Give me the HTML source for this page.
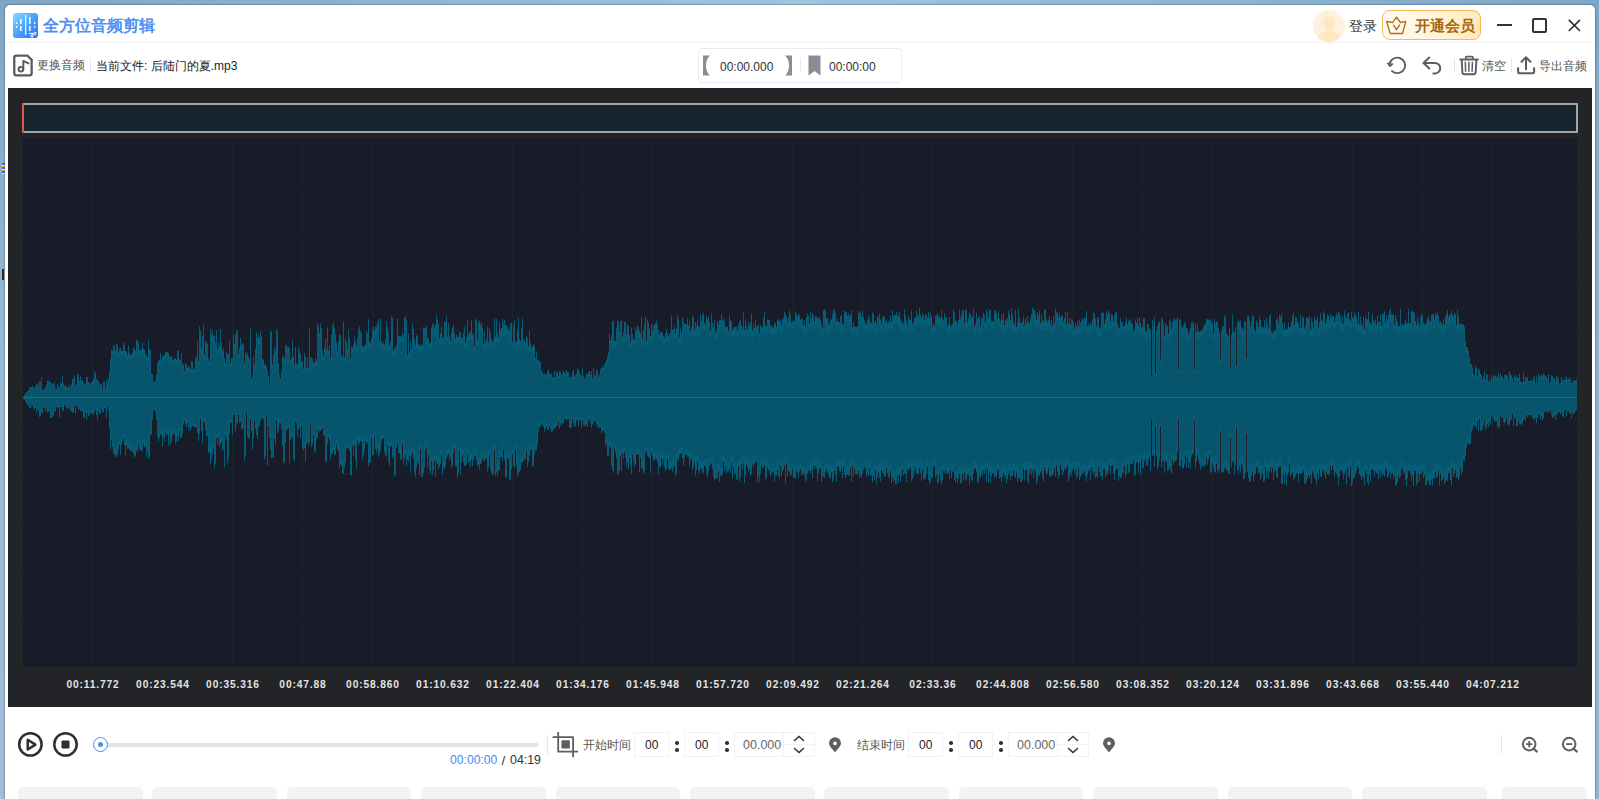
<!DOCTYPE html>
<html><head><meta charset="utf-8">
<style>
*{box-sizing:border-box;margin:0;padding:0}
html,body{width:1599px;height:799px;overflow:hidden}
body{position:relative;background:linear-gradient(90deg,#82a8c7 0%,#9cbdd6 50%,#80a7c6 100%);font-family:"Liberation Sans",sans-serif;color:#333}
.a{position:absolute}
.win{left:5px;top:5px;width:1590px;height:810px;background:#fff;border-radius:5px 5px 0 0;box-shadow:0 0 1px 1px rgba(50,80,110,.35)}
.t{position:absolute;white-space:nowrap;line-height:1}
</style></head><body>
<div class="a" style="left:0;top:0;width:1599px;height:6px;background:linear-gradient(90deg,#7fa5c4,#a3c3db 50%,#7ea6c6)"></div>
<div class="a" style="left:0;top:0;width:6px;height:799px;background:linear-gradient(180deg,#80a6c5,#9dbbd5 50%,#a3bdd6)"></div>
<div class="a" style="left:1594px;top:0;width:5px;height:799px;background:linear-gradient(180deg,#7ea6c6,#92b2d0 50%,#96b5d2)"></div>
<div class="a" style="left:2px;top:163px;width:3px;height:11px;background:repeating-linear-gradient(180deg,#2c6fc2 0 2px,#f3f6fa 2px 3px,#e7a24a 3px 4px)"></div>
<div class="a" style="left:2px;top:269px;width:3px;height:11px;background:linear-gradient(90deg,#1d2a58 60%,#e2a05a 60%)"></div>
<div class="a win"></div>
<!-- logo -->
<div class="a" style="left:13px;top:13px;width:25px;height:25px;border-radius:3px;background:linear-gradient(135deg,#84dcfd 0%,#4aa3fb 50%,#2a73f3 100%)"></div>
<svg class="a" style="left:13px;top:13px" width="25" height="25" viewBox="0 0 25 25">
<g fill="#fff" opacity=".92">
<rect x="3" y="9" width="1.3" height="2"/><rect x="3" y="13" width="1.3" height="2"/>
<rect x="7" y="6" width="1.6" height="5"/><rect x="7" y="13" width="1.6" height="5"/>
<rect x="12" y="2" width="1.3" height="20"/>
<rect x="16" y="4" width="1.6" height="7"/><rect x="16" y="13" width="1.6" height="5"/>
<rect x="21" y="9" width="1.3" height="2"/><rect x="21" y="13" width="1.3" height="2"/>
</g>
<g stroke="#fff" stroke-width=".9" fill="none"><circle cx="22" cy="20.5" r="1.2"/><circle cx="19" cy="23" r="1.2"/><path d="M16 20.5h5M20.5 20.5l-2 2"/></g>
</svg>
<div class="t" style="left:43px;top:18px;font-size:16px;font-weight:bold;color:#5090f0">全方位音频剪辑</div>
<div class="a" style="left:8px;top:42px;width:1584px;height:1px;background:#eef0f4"></div>

<!-- avatar -->
<div class="a" style="left:1313px;top:9.5px;width:32px;height:32px;border-radius:50%;background:#fef1df;overflow:hidden">
<div class="a" style="left:10px;top:6.5px;width:11.5px;height:13px;border-radius:40% 40% 45% 45%;background:#ffe7c3"></div>
<div class="a" style="left:13px;top:17px;width:6px;height:6px;background:#ffe7c3"></div>
<div class="a" style="left:5px;top:21.5px;width:22px;height:16px;border-radius:50% 50% 40% 40%;background:#ffe7c3"></div>
</div>
<div class="t" style="left:1349px;top:19px;font-size:14px;color:#333">登录</div>
<!-- vip -->
<div class="a" style="left:1382px;top:10px;width:99px;height:30px;border-radius:8px;border:1.3px solid #fcb853;background:linear-gradient(90deg,#fffcf3,#fff4d8 60%,#ffe9b8)"></div>
<svg class="a" style="left:1385px;top:15px" width="22" height="20" viewBox="0 0 22 20">
<path d="M1.6 6.4 L7.6 7.5 L11.4 2.1 L15.4 7.5 L20.7 6.4 L17.6 18.5 H5.2 Z" fill="none" stroke="#b06a10" stroke-width="1.3" stroke-linejoin="round"/>
<path d="M8.6 10.2 L11.4 14.7 L14.6 10.2" fill="none" stroke="#b06a10" stroke-width="1.3" stroke-linecap="round" stroke-linejoin="round"/>
</svg>
<div class="t" style="left:1415px;top:18.5px;font-size:14.7px;font-weight:bold;color:#a8660c">开通会员</div>
<!-- window controls -->
<div class="a" style="left:1497px;top:24px;width:15px;height:2px;background:#333"></div>
<div class="a" style="left:1532px;top:18px;width:15px;height:15px;border:2px solid #333;border-radius:2px"></div>
<svg class="a" style="left:1566px;top:17px" width="17" height="17" viewBox="0 0 17 17"><path d="M3.3 3.3L13.5 13.5M13.5 3.3L3.3 13.5" stroke="#333" stroke-width="1.7" stroke-linecap="round"/></svg>

<!-- toolbar -->
<svg class="a" style="left:12px;top:53px" width="23" height="25" viewBox="0 0 23 25">
<path d="M4.3 2.55 H15.3 L19.65 6.9 V20.3 Q19.65 22.35 17.6 22.35 H4.3 Q2.25 22.35 2.25 20.3 V4.6 Q2.25 2.55 4.3 2.55 Z" fill="none" stroke="#5a5c61" stroke-width="2.3" stroke-linejoin="round"/>
<path d="M11.3 16.5 V7.9 L16.4 10.3" fill="none" stroke="#5a5c61" stroke-width="2" stroke-linecap="round" stroke-linejoin="round"/>
<circle cx="8.9" cy="16.2" r="2.3" fill="none" stroke="#5a5c61" stroke-width="2"/>
</svg>
<div class="t" style="left:37px;top:59px;font-size:12px;color:#555">更换音频</div>
<div class="a" style="left:90px;top:58px;width:1px;height:15px;background:#e3e6ee"></div>
<div class="t" style="left:96px;top:60px;font-size:12px;color:#222">当前文件: 后陆门的夏.mp3</div>

<!-- center time box -->
<div class="a" style="left:698px;top:48px;width:204px;height:35px;border:1px solid #e8ebf3;border-radius:4px"></div>
<svg class="a" style="left:702px;top:55px" width="10" height="21" viewBox="0 0 10 21"><path d="M1 0.5 H8 Q4 4 4 10.5 Q4 17 8 20.5 H1 Z" fill="#8a8d93"/></svg>
<div class="t" style="left:720px;top:61px;font-size:12px;color:#333">00:00.000</div>
<svg class="a" style="left:783px;top:55px" width="10" height="21" viewBox="0 0 10 21"><path d="M9 0.5 H2 Q6 4 6 10.5 Q6 17 2 20.5 H9 Z" fill="#8a8d93"/></svg>
<div class="a" style="left:800px;top:58px;width:1px;height:14px;background:#e6e9f0"></div>
<svg class="a" style="left:808px;top:55px" width="13" height="21" viewBox="0 0 13 21"><path d="M0.5 0.5 H12.5 V20.5 L6.5 16 L0.5 20.5 Z" fill="#8a8d93"/></svg>
<div class="t" style="left:829px;top:61px;font-size:12px;color:#333">00:00:00</div>

<!-- right toolbar -->
<svg class="a" style="left:1386px;top:55px" width="21" height="21" viewBox="0 0 21 21">
<path d="M5.9 16 A7.8 7.8 0 1 0 3.5 10.4" fill="none" stroke="#5c5e63" stroke-width="1.8" stroke-linecap="round"/>
<path d="M2 8.2 L4 11 L6.3 9" fill="none" stroke="#5c5e63" stroke-width="1.8" stroke-linecap="round" stroke-linejoin="round"/>
</svg>
<svg class="a" style="left:1421px;top:55px" width="21" height="21" viewBox="0 0 21 21">
<path d="M8.3 2.6 L2.5 8 L8.3 13.5 M2.5 8 H14 A5.2 5.2 0 0 1 14 18.4 H12.4" fill="none" stroke="#5c5e63" stroke-width="2" stroke-linecap="round" stroke-linejoin="round"/>
</svg>
<div class="a" style="left:1454px;top:58px;width:1px;height:15px;background:#e3e6ee"></div>
<svg class="a" style="left:1459px;top:55px" width="20" height="21" viewBox="0 0 20 21">
<path d="M1.3 4.5 H18.9" stroke="#5c5e63" stroke-width="1.9" stroke-linecap="round"/>
<path d="M6.8 4 V2.6 Q6.8 1.6 7.8 1.6 H12.9 Q13.9 1.6 13.9 2.6 V4" fill="none" stroke="#5c5e63" stroke-width="1.7"/>
<path d="M2.7 5 L3.4 17.3 Q3.5 19.3 5.5 19.3 H14.6 Q16.6 19.3 16.7 17.3 L17.4 5" fill="none" stroke="#5c5e63" stroke-width="1.9" stroke-linejoin="round"/>
<path d="M6.3 6.8 L6.6 16.7 M9.9 6.8 V16.7 M13.4 6.8 L13.1 16.7" stroke="#5c5e63" stroke-width="1.5"/>
</svg>
<div class="t" style="left:1482px;top:60px;font-size:12px;color:#555">清空</div>
<div class="a" style="left:1511px;top:58px;width:1px;height:15px;background:#e3e6ee"></div>
<svg class="a" style="left:1516px;top:55px" width="20" height="21" viewBox="0 0 20 21">
<path d="M10 2.5 V14.3 M5.6 6.8 L10 2.3 L14.4 6.8" fill="none" stroke="#5c5e63" stroke-width="2.1" stroke-linecap="round" stroke-linejoin="round"/>
<path d="M2.1 13.2 V16.5 Q2.1 18.3 3.9 18.3 H16.3 Q18.1 18.3 18.1 16.5 V13.2" fill="none" stroke="#5c5e63" stroke-width="2.1" stroke-linecap="round" stroke-linejoin="round"/>
</svg>
<div class="t" style="left:1539px;top:60px;font-size:12px;color:#555">导出音频</div>

<!-- dark panel -->
<svg class="a" style="left:8px;top:88px" width="1584" height="619" viewBox="8 88 1584 619">
<rect x="8" y="88" width="1584" height="619" fill="#222428"/>
<rect x="23" y="138" width="1554" height="529" fill="#171c28"/>
<g stroke="#1d222b" stroke-width="1"><path d="M92.5 138V667"/><path d="M162.5 138V667"/><path d="M232.5 138V667"/><path d="M302.5 138V667"/><path d="M372.5 138V667"/><path d="M442.5 138V667"/><path d="M512.5 138V667"/><path d="M582.5 138V667"/><path d="M652.5 138V667"/><path d="M722.5 138V667"/><path d="M792.5 138V667"/><path d="M862.5 138V667"/><path d="M932.5 138V667"/><path d="M1002.5 138V667"/><path d="M1072.5 138V667"/><path d="M1142.5 138V667"/><path d="M1212.5 138V667"/><path d="M1282.5 138V667"/><path d="M1352.5 138V667"/><path d="M1422.5 138V667"/><path d="M1492.5 138V667"/><path d="M23 185.5H1577"/><path d="M23 233.5H1577"/><path d="M23 281.5H1577"/><path d="M23 329.5H1577"/><path d="M23 377.5H1577"/><path d="M23 425.5H1577"/><path d="M23 473.5H1577"/><path d="M23 521.5H1577"/><path d="M23 569.5H1577"/><path d="M23 617.5H1577"/></g>
<path d="M23,397.5V396.7h1V395.0h1V393.2h1V392.4h1V390.9h1V390.3h1V387.6h1V387.1h1V387.0h1V385.8h1V387.7h1V387.9h1V386.5h1V383.9h1V383.5h1V387.0h1V381.6h1V381.9h1V377.3h1V390.1h1V390.6h1V388.8h1V387.3h1V384.8h1V380.5h1V380.6h1V381.3h1V382.3h1V382.9h1V383.6h1V384.2h1V381.4h1V388.9h1V388.7h1V384.1h1V386.8h1V387.3h1V382.6h1V383.6h1V375.8h1V383.5h1V385.7h1V384.7h1V387.2h1V387.3h1V386.8h1V384.4h1V387.5h1V384.4h1V378.8h1V379.2h1V375.6h1V386.3h1V383.9h1V373.5h1V374.5h1V380.7h1V375.9h1V381.0h1V379.9h1V383.4h1V382.9h1V384.7h1V377.0h1V377.3h1V382.2h1V382.8h1V385.7h1V381.8h1V382.1h1V379.1h1V371.4h1V373.1h1V379.3h1V379.9h1V381.1h1V383.2h1V384.2h1V383.7h1V389.6h1V381.5h1V381.8h1V387.5h1V379.9h1V383.2h1V378.3h1V371.4h1V359.0h1V349.6h1V350.7h1V345.0h1V345.9h1V350.8h1V343.6h1V344.5h1V352.5h1V348.6h1V347.8h1V350.6h1V350.7h1V342.1h1V344.9h1V350.9h1V351.2h1V355.3h1V345.5h1V352.8h1V355.1h1V354.9h1V352.8h1V347.7h1V349.0h1V351.1h1V339.7h1V340.8h1V342.6h1V350.2h1V349.6h1V350.0h1V343.3h1V348.3h1V349.5h1V353.5h1V355.6h1V357.6h1V339.7h1V349.6h1V349.8h1V373.6h1V374.2h1V383.0h1V380.9h1V380.8h1V375.2h1V363.3h1V360.4h1V360.3h1V353.2h1V360.6h1V356.3h1V356.2h1V354.6h1V351.8h1V351.8h1V352.2h1V352.9h1V356.0h1V357.5h1V356.0h1V359.5h1V360.4h1V358.6h1V358.6h1V360.0h1V350.6h1V350.7h1V358.9h1V360.4h1V353.2h1V365.4h1V363.7h1V371.3h1V363.5h1V364.1h1V367.8h1V366.4h1V366.8h1V368.8h1V361.3h1V362.1h1V369.9h1V368.2h1V358.8h1V356.1h1V341.2h1V361.3h1V326.6h1V330.6h1V348.8h1V335.4h1V324.4h1V355.0h1V341.7h1V340.9h1V343.9h1V358.8h1V361.8h1V328.7h1V334.5h1V330.2h1V336.2h1V335.3h1V342.4h1V330.6h1V349.8h1V342.6h1V346.0h1V329.1h1V343.3h1V350.6h1V348.3h1V357.9h1V363.3h1V351.4h1V354.5h1V353.7h1V340.9h1V362.8h1V358.3h1V358.7h1V333.8h1V343.6h1V334.5h1V329.9h1V331.5h1V354.0h1V347.8h1V338.1h1V344.8h1V343.3h1V344.8h1V363.6h1V352.1h1V355.0h1V352.5h1V356.8h1V359.0h1V328.7h1V379.1h1V375.0h1V356.4h1V364.5h1V349.1h1V332.5h1V338.1h1V334.7h1V338.0h1V331.1h1V336.2h1V359.3h1V359.4h1V364.2h1V364.8h1V366.3h1V371.1h1V375.9h1V384.4h1V331.0h1V331.7h1V364.4h1V355.0h1V347.1h1V350.4h1V329.5h1V331.5h1V363.5h1V375.0h1V378.8h1V371.4h1V356.8h1V355.5h1V359.1h1V345.0h1V345.1h1V347.0h1V346.8h1V348.3h1V360.1h1V358.1h1V340.0h1V356.6h1V364.4h1V346.9h1V363.5h1V365.3h1V346.5h1V350.4h1V354.1h1V360.9h1V362.2h1V368.8h1V353.1h1V356.5h1V368.6h1V356.4h1V367.7h1V328.7h1V357.6h1V356.9h1V359.1h1V362.6h1V362.8h1V358.2h1V361.2h1V322.9h1V326.5h1V333.1h1V323.2h1V328.6h1V350.5h1V356.1h1V347.4h1V338.0h1V349.9h1V327.5h1V350.6h1V345.4h1V358.5h1V334.8h1V325.1h1V321.9h1V327.4h1V334.8h1V342.2h1V351.8h1V341.6h1V333.7h1V335.2h1V354.9h1V357.7h1V321.6h1V357.3h1V338.4h1V341.8h1V349.1h1V329.9h1V338.6h1V358.7h1V346.1h1V347.7h1V344.5h1V336.6h1V341.8h1V346.5h1V338.2h1V329.8h1V326.5h1V331.2h1V332.8h1V346.1h1V346.8h1V345.6h1V344.5h1V330.9h1V333.6h1V319.1h1V341.5h1V343.1h1V338.5h1V329.4h1V326.2h1V330.7h1V326.5h1V326.5h1V322.8h1V318.7h1V341.0h1V319.2h1V341.3h1V344.3h1V342.2h1V344.5h1V339.4h1V321.1h1V327.2h1V332.4h1V345.5h1V341.7h1V316.7h1V317.9h1V351.5h1V348.4h1V348.1h1V345.0h1V318.6h1V335.4h1V335.7h1V336.1h1V336.8h1V332.8h1V334.9h1V317.7h1V316.0h1V320.3h1V355.2h1V333.2h1V352.9h1V341.8h1V349.0h1V323.1h1V328.5h1V339.2h1V345.0h1V335.1h1V336.2h1V343.9h1V346.1h1V343.6h1V346.0h1V344.8h1V327.3h1V328.5h1V327.7h1V325.7h1V338.6h1V338.1h1V343.6h1V342.2h1V327.8h1V324.2h1V323.0h1V328.5h1V325.1h1V314.7h1V319.5h1V323.8h1V338.5h1V333.3h1V326.8h1V337.5h1V337.6h1V321.7h1V322.0h1V315.4h1V336.4h1V323.3h1V335.4h1V340.8h1V331.9h1V327.5h1V325.1h1V333.2h1V338.4h1V334.2h1V336.7h1V336.7h1V331.7h1V332.6h1V337.8h1V338.0h1V332.4h1V326.5h1V343.0h1V337.4h1V319.4h1V334.8h1V332.2h1V331.2h1V320.3h1V334.5h1V333.6h1V346.2h1V318.8h1V320.3h1V339.3h1V322.4h1V320.6h1V325.0h1V322.2h1V327.9h1V344.0h1V331.8h1V342.8h1V338.9h1V326.9h1V342.2h1V328.1h1V332.4h1V339.8h1V342.5h1V339.5h1V317.8h1V336.6h1V318.8h1V332.1h1V337.2h1V322.4h1V329.3h1V328.2h1V319.3h1V323.2h1V319.8h1V325.0h1V325.2h1V329.0h1V326.8h1V331.6h1V323.5h1V322.7h1V342.3h1V324.7h1V320.2h1V342.2h1V341.3h1V329.8h1V317.5h1V338.8h1V341.2h1V328.0h1V318.4h1V341.2h1V339.2h1V342.5h1V336.3h1V337.4h1V345.7h1V330.8h1V342.6h1V347.4h1V346.5h1V344.1h1V345.6h1V358.2h1V351.2h1V360.5h1V359.6h1V361.6h1V362.5h1V371.5h1V372.1h1V374.3h1V373.4h1V374.6h1V374.7h1V371.6h1V368.9h1V373.4h1V374.3h1V373.7h1V377.2h1V377.8h1V370.9h1V377.7h1V372.0h1V372.0h1V376.2h1V371.3h1V371.9h1V375.1h1V374.2h1V370.5h1V372.4h1V373.2h1V370.0h1V371.9h1V372.8h1V378.1h1V376.4h1V377.4h1V371.8h1V369.7h1V377.1h1V375.0h1V374.1h1V368.5h1V369.7h1V372.5h1V375.4h1V375.6h1V368.1h1V376.7h1V378.6h1V378.8h1V373.9h1V374.5h1V372.3h1V371.0h1V374.7h1V371.1h1V378.4h1V367.6h1V375.2h1V375.3h1V369.2h1V370.5h1V377.8h1V374.3h1V369.3h1V368.0h1V365.6h1V368.0h1V364.2h1V362.2h1V360.0h1V355.8h1V351.7h1V333.7h1V340.5h1V336.2h1V320.8h1V321.1h1V340.9h1V340.7h1V328.3h1V320.7h1V321.3h1V331.8h1V321.6h1V320.6h1V336.6h1V331.8h1V322.1h1V322.2h1V334.0h1V325.0h1V325.4h1V335.3h1V342.4h1V327.4h1V333.8h1V339.3h1V339.9h1V327.3h1V330.4h1V325.3h1V326.8h1V330.9h1V333.1h1V317.1h1V339.1h1V330.3h1V323.0h1V316.4h1V341.1h1V319.7h1V322.8h1V328.6h1V336.1h1V324.0h1V331.1h1V325.6h1V324.6h1V323.2h1V320.5h1V324.6h1V330.6h1V334.5h1V332.1h1V331.7h1V332.7h1V336.4h1V337.4h1V333.7h1V329.3h1V333.0h1V336.0h1V334.2h1V331.8h1V315.4h1V329.4h1V329.5h1V326.6h1V333.2h1V328.1h1V314.8h1V319.1h1V336.9h1V328.5h1V333.1h1V316.9h1V321.4h1V323.7h1V324.2h1V324.1h1V318.5h1V325.8h1V320.5h1V331.4h1V326.8h1V316.5h1V317.2h1V329.4h1V322.0h1V326.6h1V320.5h1V325.6h1V327.0h1V314.2h1V321.0h1V314.7h1V313.1h1V323.4h1V322.4h1V314.9h1V319.0h1V316.1h1V322.0h1V331.2h1V313.2h1V322.8h1V327.3h1V320.3h1V333.1h1V329.6h1V321.1h1V323.9h1V319.7h1V320.1h1V314.5h1V319.8h1V321.5h1V318.6h1V327.0h1V326.7h1V326.7h1V331.2h1V315.3h1V320.5h1V321.2h1V329.9h1V328.6h1V326.6h1V327.1h1V326.7h1V331.0h1V324.8h1V321.1h1V320.4h1V325.2h1V327.8h1V312.6h1V329.7h1V320.2h1V326.1h1V329.3h1V322.2h1V325.6h1V322.5h1V313.6h1V330.3h1V323.4h1V328.1h1V319.2h1V326.7h1V325.6h1V324.4h1V332.9h1V324.9h1V326.9h1V327.3h1V318.3h1V311.5h1V325.4h1V326.1h1V319.4h1V319.7h1V319.5h1V326.3h1V325.5h1V328.2h1V326.7h1V322.5h1V323.4h1V326.8h1V320.2h1V319.6h1V321.3h1V319.2h1V325.0h1V319.5h1V318.1h1V312.0h1V314.8h1V316.1h1V321.1h1V318.1h1V310.4h1V314.8h1V322.4h1V320.5h1V321.9h1V320.6h1V311.6h1V313.8h1V317.2h1V314.3h1V314.7h1V319.4h1V318.4h1V318.8h1V324.8h1V320.3h1V326.8h1V317.0h1V313.2h1V316.1h1V323.4h1V311.7h1V318.8h1V312.7h1V315.2h1V321.8h1V315.9h1V316.2h1V317.8h1V318.6h1V317.3h1V320.0h1V324.2h1V328.2h1V309.7h1V309.4h1V310.6h1V318.6h1V318.1h1V322.9h1V324.6h1V318.4h1V320.2h1V314.8h1V309.8h1V309.0h1V313.2h1V321.7h1V318.5h1V322.1h1V322.3h1V316.1h1V314.9h1V324.4h1V324.2h1V311.0h1V311.6h1V312.0h1V315.4h1V312.7h1V316.5h1V315.0h1V309.7h1V327.2h1V322.4h1V326.8h1V326.2h1V327.1h1V326.0h1V313.6h1V311.1h1V312.9h1V316.9h1V310.9h1V317.3h1V320.2h1V323.4h1V323.7h1V320.6h1V315.7h1V318.4h1V323.3h1V322.3h1V311.5h1V313.7h1V322.4h1V320.7h1V323.8h1V315.9h1V317.6h1V313.6h1V319.4h1V323.8h1V317.5h1V316.3h1V316.4h1V322.1h1V318.9h1V323.6h1V322.4h1V320.9h1V315.5h1V321.6h1V310.0h1V315.5h1V314.6h1V314.8h1V311.6h1V315.5h1V315.8h1V312.0h1V319.0h1V321.4h1V322.5h1V323.5h1V309.6h1V315.7h1V320.5h1V325.0h1V316.2h1V318.6h1V320.0h1V311.1h1V324.0h1V321.9h1V317.7h1V317.5h1V310.3h1V314.9h1V316.6h1V307.8h1V315.0h1V317.7h1V313.8h1V315.7h1V319.5h1V313.6h1V315.3h1V317.8h1V312.1h1V317.8h1V312.8h1V316.1h1V326.4h1V323.2h1V325.5h1V315.5h1V315.7h1V313.1h1V315.2h1V317.2h1V317.8h1V310.1h1V318.3h1V320.4h1V313.2h1V318.1h1V317.0h1V326.2h1V324.0h1V317.2h1V325.7h1V325.4h1V323.6h1V309.7h1V312.2h1V320.5h1V321.4h1V324.0h1V320.1h1V309.8h1V318.2h1V314.4h1V310.0h1V310.2h1V323.0h1V309.3h1V310.1h1V322.1h1V317.9h1V312.6h1V314.5h1V317.7h1V315.9h1V308.5h1V326.6h1V323.8h1V312.5h1V319.0h1V317.5h1V316.4h1V326.6h1V318.5h1V317.5h1V313.1h1V315.2h1V322.6h1V309.8h1V312.6h1V317.8h1V309.2h1V310.1h1V321.3h1V321.0h1V321.4h1V310.5h1V310.5h1V313.8h1V319.3h1V311.5h1V318.8h1V321.6h1V314.6h1V320.1h1V312.9h1V325.0h1V319.7h1V320.8h1V317.4h1V310.5h1V314.3h1V320.2h1V308.5h1V314.1h1V321.5h1V324.5h1V309.6h1V326.9h1V322.5h1V309.1h1V317.8h1V323.0h1V322.8h1V321.2h1V316.8h1V325.3h1V318.4h1V323.2h1V315.9h1V322.1h1V323.7h1V318.6h1V314.6h1V307.8h1V309.8h1V310.0h1V313.6h1V319.8h1V312.1h1V315.6h1V310.5h1V323.0h1V314.1h1V320.2h1V321.6h1V309.4h1V309.2h1V319.6h1V322.5h1V319.8h1V316.0h1V323.8h1V320.0h1V325.7h1V316.6h1V322.6h1V309.0h1V312.8h1V312.1h1V317.4h1V313.5h1V317.7h1V315.5h1V315.5h1V321.4h1V318.1h1V311.2h1V323.9h1V311.7h1V323.1h1V318.1h1V324.5h1V318.7h1V319.4h1V321.4h1V328.7h1V322.9h1V326.6h1V321.1h1V326.1h1V319.4h1V323.3h1V320.8h1V318.4h1V320.4h1V317.4h1V318.0h1V310.9h1V326.3h1V323.3h1V325.2h1V322.5h1V325.0h1V319.6h1V312.5h1V313.5h1V318.7h1V326.5h1V317.6h1V317.3h1V328.6h1V327.6h1V313.0h1V311.7h1V312.9h1V323.7h1V319.4h1V311.8h1V314.3h1V311.0h1V312.8h1V321.6h1V314.6h1V315.1h1V321.4h1V314.7h1V312.4h1V311.9h1V322.9h1V328.2h1V327.2h1V318.5h1V321.8h1V322.5h1V326.4h1V325.8h1V322.4h1V317.5h1V324.3h1V321.2h1V319.6h1V319.7h1V322.9h1V322.9h1V331.8h1V329.6h1V319.6h1V322.7h1V318.3h1V325.2h1V317.0h1V322.9h1V327.7h1V326.9h1V318.1h1V318.2h1V331.0h1V332.4h1V323.7h1V324.4h1V328.4h1V330.3h1V375.5h1V320.0h1V325.6h1V317.6h1V373.5h1V330.8h1V326.1h1V322.8h1V321.6h1V359.5h1V317.5h1V319.3h1V323.7h1V335.4h1V323.1h1V325.3h1V325.7h1V333.6h1V319.5h1V321.3h1V328.9h1V321.7h1V319.3h1V318.6h1V320.4h1V318.9h1V316.8h1V369.5h1V319.8h1V318.5h1V325.5h1V328.4h1V325.0h1V322.1h1V324.0h1V328.0h1V328.5h1V334.4h1V331.6h1V327.6h1V322.3h1V321.8h1V323.3h1V369.5h1V323.5h1V332.0h1V323.5h1V331.1h1V331.6h1V331.0h1V330.8h1V329.6h1V326.9h1V324.5h1V323.8h1V318.5h1V319.5h1V319.9h1V319.6h1V320.0h1V321.4h1V323.0h1V333.6h1V319.0h1V322.9h1V321.6h1V322.1h1V327.9h1V333.2h1V359.5h1V331.1h1V327.0h1V325.9h1V315.4h1V317.5h1V332.8h1V334.7h1V336.6h1V327.3h1V367.5h1V334.5h1V314.8h1V331.7h1V331.7h1V326.9h1V365.5h1V322.1h1V319.7h1V322.0h1V320.4h1V327.0h1V328.1h1V330.6h1V321.2h1V321.4h1V358.5h1V316.0h1V315.3h1V319.4h1V326.6h1V321.4h1V315.2h1V315.9h1V328.9h1V331.6h1V320.5h1V323.3h1V327.1h1V316.4h1V320.1h1V327.3h1V326.4h1V327.5h1V320.3h1V328.4h1V317.9h1V324.1h1V328.6h1V315.9h1V314.3h1V331.5h1V333.1h1V330.4h1V331.5h1V330.1h1V319.8h1V317.4h1V323.3h1V314.8h1V317.3h1V314.0h1V323.5h1V329.9h1V322.4h1V329.6h1V329.4h1V328.6h1V322.8h1V327.1h1V326.7h1V321.2h1V316.0h1V312.5h1V324.9h1V317.2h1V317.5h1V321.7h1V323.5h1V327.9h1V314.2h1V327.9h1V316.7h1V316.9h1V328.5h1V325.6h1V317.6h1V317.2h1V318.5h1V315.8h1V329.7h1V318.4h1V321.5h1V328.3h1V316.5h1V319.5h1V320.3h1V316.2h1V327.9h1V322.0h1V313.0h1V319.4h1V321.0h1V311.0h1V313.3h1V323.8h1V319.2h1V314.3h1V315.3h1V320.3h1V313.5h1V317.4h1V315.8h1V316.5h1V321.7h1V317.0h1V312.4h1V315.5h1V312.3h1V312.8h1V316.5h1V322.6h1V315.9h1V324.0h1V310.8h1V316.3h1V318.2h1V313.0h1V312.4h1V319.3h1V321.4h1V312.3h1V317.7h1V317.0h1V312.2h1V314.4h1V316.8h1V323.4h1V311.7h1V324.5h1V316.2h1V324.3h1V325.5h1V317.1h1V329.0h1V315.5h1V319.1h1V319.2h1V311.8h1V322.2h1V322.5h1V324.3h1V314.1h1V319.9h1V322.5h1V319.4h1V325.0h1V315.4h1V321.8h1V322.2h1V314.4h1V326.0h1V313.3h1V313.7h1V311.2h1V322.8h1V315.3h1V320.6h1V315.0h1V310.7h1V308.4h1V314.4h1V313.8h1V315.1h1V325.1h1V315.3h1V319.1h1V322.5h1V326.0h1V326.1h1V309.1h1V324.8h1V324.0h1V325.7h1V323.0h1V319.8h1V324.1h1V322.4h1V308.9h1V323.3h1V323.4h1V311.4h1V310.1h1V312.0h1V313.0h1V320.9h1V325.0h1V316.9h1V321.8h1V325.8h1V316.9h1V314.1h1V315.1h1V322.5h1V324.3h1V324.7h1V321.7h1V318.2h1V316.2h1V320.4h1V321.8h1V314.4h1V314.1h1V314.4h1V320.2h1V312.4h1V314.9h1V312.5h1V315.7h1V322.5h1V321.0h1V323.0h1V325.1h1V319.4h1V324.6h1V316.5h1V313.6h1V310.0h1V317.4h1V315.1h1V314.6h1V310.4h1V314.5h1V316.3h1V312.4h1V314.3h1V324.8h1V309.4h1V316.1h1V324.2h1V323.9h1V323.4h1V324.6h1V324.3h1V326.8h1V341.4h1V347.6h1V347.1h1V350.9h1V357.6h1V364.1h1V364.4h1V367.4h1V374.2h1V375.6h1V366.1h1V368.0h1V376.5h1V368.3h1V370.6h1V373.7h1V375.0h1V379.6h1V376.8h1V371.3h1V380.2h1V373.5h1V374.9h1V381.9h1V379.1h1V381.6h1V375.3h1V379.4h1V375.2h1V375.6h1V376.0h1V377.7h1V376.1h1V372.7h1V378.2h1V373.2h1V375.7h1V377.1h1V378.9h1V375.1h1V375.3h1V374.7h1V375.7h1V380.3h1V371.1h1V374.3h1V375.5h1V377.7h1V382.3h1V375.4h1V377.7h1V375.3h1V377.4h1V378.3h1V373.8h1V381.2h1V381.9h1V382.3h1V372.6h1V382.0h1V377.3h1V378.3h1V377.2h1V380.9h1V381.2h1V380.8h1V379.4h1V381.1h1V378.2h1V376.3h1V383.5h1V376.4h1V383.8h1V373.9h1V376.0h1V377.1h1V374.4h1V375.8h1V373.5h1V374.8h1V375.3h1V376.9h1V379.6h1V374.1h1V382.8h1V381.7h1V375.3h1V375.8h1V378.2h1V378.2h1V381.7h1V376.4h1V376.8h1V379.6h1V383.4h1V382.9h1V377.0h1V379.7h1V381.2h1V379.3h1V379.4h1V376.4h1V379.8h1V379.3h1V378.5h1V378.8h1V383.0h1V382.6h1V380.2h1V380.5h1V380.2h1V379.4h1V397.5V410.3h-1V410.9h-1V413.2h-1V414.3h-1V412.3h-1V418.6h-1V413.2h-1V413.8h-1V411.0h-1V411.7h-1V416.2h-1V409.8h-1V410.7h-1V417.2h-1V416.5h-1V412.6h-1V413.9h-1V412.1h-1V412.6h-1V414.3h-1V414.7h-1V419.6h-1V415.3h-1V417.2h-1V417.7h-1V415.3h-1V409.9h-1V412.4h-1V411.3h-1V412.8h-1V411.5h-1V411.7h-1V411.9h-1V418.3h-1V420.8h-1V416.0h-1V419.4h-1V414.6h-1V414.3h-1V417.7h-1V423.3h-1V418.1h-1V418.6h-1V420.1h-1V416.7h-1V416.6h-1V414.7h-1V414.8h-1V415.4h-1V417.6h-1V414.2h-1V421.0h-1V419.0h-1V419.7h-1V423.4h-1V424.4h-1V424.5h-1V423.8h-1V420.5h-1V425.8h-1V425.9h-1V418.1h-1V417.3h-1V425.8h-1V413.5h-1V419.6h-1V420.6h-1V425.1h-1V424.7h-1V423.8h-1V417.0h-1V421.4h-1V423.6h-1V422.3h-1V417.0h-1V418.6h-1V415.8h-1V427.8h-1V426.1h-1V428.2h-1V420.9h-1V420.5h-1V422.0h-1V419.1h-1V416.6h-1V416.9h-1V424.5h-1V421.4h-1V427.3h-1V423.7h-1V427.3h-1V430.2h-1V420.3h-1V425.6h-1V428.7h-1V430.2h-1V431.3h-1V419.1h-1V430.8h-1V420.8h-1V428.3h-1V426.2h-1V426.5h-1V424.8h-1V429.8h-1V432.6h-1V443.8h-1V444.1h-1V444.4h-1V442.4h-1V447.9h-1V456.0h-1V460.9h-1V460.1h-1V471.4h-1V473.9h-1V468.0h-1V477.0h-1V479.9h-1V477.1h-1V477.8h-1V470.4h-1V473.6h-1V476.8h-1V467.9h-1V485.5h-1V480.1h-1V472.8h-1V472.9h-1V481.2h-1V479.9h-1V482.0h-1V484.6h-1V477.4h-1V480.0h-1V481.2h-1V473.3h-1V485.6h-1V471.0h-1V476.9h-1V477.9h-1V471.7h-1V478.8h-1V478.1h-1V485.8h-1V479.8h-1V485.7h-1V484.0h-1V480.7h-1V480.7h-1V484.9h-1V484.6h-1V475.2h-1V478.6h-1V471.4h-1V474.1h-1V474.8h-1V481.7h-1V473.6h-1V482.9h-1V485.1h-1V470.4h-1V471.4h-1V485.8h-1V476.3h-1V480.9h-1V473.7h-1V470.6h-1V470.9h-1V478.4h-1V486.2h-1V479.9h-1V471.6h-1V474.0h-1V467.7h-1V469.3h-1V476.6h-1V478.2h-1V475.6h-1V482.0h-1V484.8h-1V485.9h-1V475.3h-1V478.7h-1V473.4h-1V474.1h-1V478.5h-1V471.4h-1V476.1h-1V478.0h-1V469.3h-1V468.3h-1V476.7h-1V474.4h-1V475.8h-1V471.4h-1V477.5h-1V469.8h-1V479.3h-1V473.5h-1V472.7h-1V471.6h-1V476.3h-1V470.5h-1V469.5h-1V469.8h-1V481.4h-1V474.5h-1V484.8h-1V481.9h-1V473.8h-1V470.3h-1V485.1h-1V478.2h-1V476.1h-1V480.0h-1V476.5h-1V474.2h-1V468.6h-1V466.1h-1V471.1h-1V473.5h-1V477.1h-1V479.1h-1V483.8h-1V486.0h-1V466.4h-1V478.4h-1V475.3h-1V467.5h-1V484.3h-1V470.5h-1V474.1h-1V479.2h-1V472.6h-1V470.0h-1V470.7h-1V477.3h-1V485.9h-1V476.7h-1V473.6h-1V471.7h-1V476.5h-1V469.7h-1V465.9h-1V470.7h-1V466.6h-1V473.7h-1V475.2h-1V474.5h-1V472.1h-1V478.7h-1V474.0h-1V469.6h-1V471.7h-1V477.4h-1V476.5h-1V469.6h-1V479.4h-1V473.0h-1V484.5h-1V479.5h-1V477.8h-1V473.6h-1V471.6h-1V483.6h-1V475.2h-1V478.1h-1V475.2h-1V478.5h-1V481.0h-1V483.8h-1V484.0h-1V470.5h-1V472.5h-1V473.4h-1V474.0h-1V473.6h-1V482.3h-1V472.9h-1V473.6h-1V476.3h-1V477.5h-1V480.6h-1V472.5h-1V473.7h-1V476.5h-1V464.0h-1V472.6h-1V475.3h-1V485.4h-1V472.6h-1V483.8h-1V474.6h-1V483.5h-1V483.9h-1V466.5h-1V467.1h-1V467.8h-1V477.8h-1V476.8h-1V470.1h-1V471.4h-1V480.5h-1V467.8h-1V472.6h-1V467.3h-1V471.7h-1V478.7h-1V470.8h-1V477.9h-1V467.4h-1V480.9h-1V482.0h-1V472.6h-1V476.7h-1V480.3h-1V473.4h-1V472.7h-1V468.6h-1V466.7h-1V472.9h-1V475.6h-1V481.6h-1V471.4h-1V476.0h-1V481.6h-1V481.9h-1V478.2h-1V471.7h-1V433.5h-1V472.8h-1V478.4h-1V479.5h-1V467.2h-1V463.7h-1V471.5h-1V465.5h-1V474.6h-1V469.4h-1V427.5h-1V465.2h-1V474.2h-1V461.6h-1V461.8h-1V467.2h-1V437.5h-1V473.6h-1V473.4h-1V471.1h-1V470.4h-1V468.3h-1V468.6h-1V471.9h-1V472.2h-1V473.1h-1V431.5h-1V469.8h-1V472.7h-1V469.9h-1V464.1h-1V472.0h-1V472.3h-1V468.8h-1V463.4h-1V472.0h-1V473.3h-1V454.8h-1V459.4h-1V465.1h-1V458.0h-1V464.6h-1V466.8h-1V465.3h-1V466.7h-1V465.8h-1V470.3h-1V463.7h-1V460.0h-1V455.4h-1V461.7h-1V467.9h-1V420.5h-1V453.3h-1V454.4h-1V456.7h-1V469.0h-1V462.7h-1V467.9h-1V457.8h-1V467.8h-1V455.6h-1V464.6h-1V467.9h-1V468.7h-1V460.3h-1V466.4h-1V466.5h-1V419.5h-1V452.2h-1V460.2h-1V461.7h-1V461.2h-1V464.9h-1V459.4h-1V473.2h-1V470.3h-1V467.6h-1V470.0h-1V471.0h-1V461.7h-1V461.1h-1V472.6h-1V460.2h-1V461.9h-1V467.6h-1V426.5h-1V459.3h-1V466.6h-1V469.0h-1V455.5h-1V426.5h-1V466.2h-1V455.5h-1V455.6h-1V419.5h-1V471.6h-1V456.4h-1V459.8h-1V465.2h-1V465.6h-1V459.1h-1V461.2h-1V467.9h-1V467.4h-1V459.8h-1V475.4h-1V462.9h-1V472.4h-1V462.1h-1V462.1h-1V474.8h-1V476.3h-1V460.2h-1V464.8h-1V463.7h-1V464.2h-1V472.3h-1V472.8h-1V464.3h-1V474.0h-1V477.3h-1V465.9h-1V473.0h-1V472.6h-1V477.8h-1V478.2h-1V475.9h-1V480.9h-1V468.7h-1V469.1h-1V470.5h-1V479.7h-1V473.8h-1V465.3h-1V466.1h-1V474.3h-1V464.9h-1V470.8h-1V474.5h-1V474.6h-1V476.9h-1V469.1h-1V469.4h-1V479.9h-1V475.9h-1V476.2h-1V472.1h-1V467.0h-1V478.1h-1V475.9h-1V478.0h-1V472.1h-1V475.2h-1V471.3h-1V467.2h-1V480.9h-1V470.2h-1V471.4h-1V474.8h-1V481.5h-1V475.9h-1V471.0h-1V472.9h-1V473.4h-1V475.0h-1V477.0h-1V480.3h-1V468.3h-1V475.9h-1V478.4h-1V469.5h-1V472.8h-1V468.2h-1V470.4h-1V476.1h-1V472.7h-1V478.2h-1V482.2h-1V464.9h-1V467.8h-1V469.2h-1V468.6h-1V472.6h-1V475.1h-1V469.4h-1V465.2h-1V475.6h-1V478.5h-1V471.9h-1V465.6h-1V476.7h-1V468.5h-1V473.0h-1V475.4h-1V476.1h-1V477.2h-1V476.1h-1V468.1h-1V472.9h-1V474.9h-1V470.7h-1V467.2h-1V481.2h-1V478.1h-1V470.8h-1V472.7h-1V475.4h-1V475.9h-1V480.7h-1V484.0h-1V472.6h-1V469.4h-1V477.4h-1V471.4h-1V475.1h-1V468.9h-1V473.8h-1V484.1h-1V480.9h-1V469.9h-1V470.4h-1V480.8h-1V468.7h-1V479.9h-1V482.0h-1V481.4h-1V477.8h-1V478.7h-1V482.6h-1V472.6h-1V478.1h-1V476.0h-1V470.5h-1V476.5h-1V476.2h-1V479.8h-1V470.8h-1V474.5h-1V479.0h-1V483.5h-1V476.3h-1V477.3h-1V472.7h-1V476.8h-1V481.7h-1V477.2h-1V478.7h-1V469.6h-1V471.5h-1V478.3h-1V475.6h-1V478.2h-1V473.3h-1V473.2h-1V476.2h-1V482.5h-1V472.2h-1V482.7h-1V469.4h-1V481.9h-1V468.8h-1V474.1h-1V470.4h-1V475.8h-1V472.7h-1V478.1h-1V476.2h-1V481.2h-1V482.4h-1V472.2h-1V469.0h-1V468.0h-1V473.7h-1V480.7h-1V480.4h-1V476.2h-1V484.2h-1V474.9h-1V475.2h-1V479.5h-1V480.8h-1V472.8h-1V479.9h-1V474.0h-1V482.7h-1V483.6h-1V474.1h-1V478.2h-1V482.9h-1V477.8h-1V482.9h-1V479.7h-1V471.1h-1V472.2h-1V478.1h-1V470.6h-1V479.1h-1V472.9h-1V473.3h-1V474.3h-1V470.1h-1V473.0h-1V470.8h-1V480.3h-1V484.1h-1V480.7h-1V474.3h-1V482.5h-1V482.9h-1V475.3h-1V477.5h-1V466.4h-1V466.1h-1V478.0h-1V477.5h-1V482.1h-1V484.0h-1V479.9h-1V467.2h-1V474.2h-1V479.5h-1V478.8h-1V479.3h-1V469.7h-1V481.1h-1V473.0h-1V468.1h-1V473.8h-1V474.3h-1V473.6h-1V467.6h-1V470.6h-1V476.0h-1V479.1h-1V481.0h-1V468.8h-1V468.2h-1V470.7h-1V468.9h-1V482.6h-1V473.7h-1V473.4h-1V475.4h-1V469.2h-1V476.6h-1V481.6h-1V474.0h-1V483.0h-1V476.3h-1V484.2h-1V484.3h-1V479.9h-1V482.1h-1V477.2h-1V483.8h-1V471.2h-1V476.9h-1V477.7h-1V473.2h-1V467.7h-1V477.0h-1V476.6h-1V473.7h-1V472.6h-1V469.9h-1V481.4h-1V478.2h-1V472.1h-1V477.2h-1V484.1h-1V470.1h-1V480.1h-1V475.6h-1V482.3h-1V475.1h-1V476.0h-1V468.4h-1V476.3h-1V474.1h-1V477.2h-1V468.7h-1V467.5h-1V470.2h-1V473.4h-1V477.8h-1V475.3h-1V477.5h-1V470.7h-1V474.1h-1V474.5h-1V473.8h-1V468.0h-1V477.1h-1V466.1h-1V482.3h-1V468.3h-1V475.7h-1V475.6h-1V474.5h-1V474.7h-1V478.1h-1V475.1h-1V466.7h-1V478.1h-1V468.0h-1V472.1h-1V470.7h-1V466.7h-1V466.8h-1V481.2h-1V474.9h-1V470.5h-1V479.6h-1V482.2h-1V472.2h-1V477.3h-1V479.0h-1V474.9h-1V472.1h-1V469.3h-1V472.5h-1V478.0h-1V477.1h-1V476.3h-1V481.7h-1V468.1h-1V469.0h-1V473.8h-1V481.5h-1V468.6h-1V465.9h-1V468.9h-1V465.7h-1V478.4h-1V470.3h-1V473.8h-1V470.7h-1V470.8h-1V473.3h-1V479.6h-1V481.9h-1V474.6h-1V475.5h-1V473.1h-1V475.4h-1V469.6h-1V471.5h-1V478.5h-1V472.1h-1V471.2h-1V478.3h-1V478.5h-1V477.0h-1V469.2h-1V474.7h-1V476.0h-1V472.1h-1V470.8h-1V476.2h-1V463.7h-1V483.2h-1V466.0h-1V469.8h-1V471.5h-1V476.1h-1V466.1h-1V478.8h-1V476.1h-1V469.8h-1V475.4h-1V475.7h-1V481.8h-1V471.2h-1V471.9h-1V473.7h-1V476.6h-1V470.3h-1V471.0h-1V467.5h-1V477.8h-1V480.9h-1V465.4h-1V467.4h-1V468.2h-1V465.3h-1V474.1h-1V481.7h-1V475.7h-1V482.6h-1V461.6h-1V462.3h-1V463.2h-1V467.5h-1V464.7h-1V473.7h-1V476.3h-1V469.5h-1V471.5h-1V467.5h-1V464.1h-1V476.1h-1V482.8h-1V463.4h-1V469.6h-1V464.0h-1V477.7h-1V481.3h-1V466.6h-1V479.6h-1V479.6h-1V473.1h-1V474.7h-1V467.6h-1V478.9h-1V463.2h-1V472.6h-1V468.4h-1V471.6h-1V471.3h-1V473.0h-1V466.6h-1V471.2h-1V461.9h-1V473.6h-1V476.0h-1V476.3h-1V481.5h-1V471.6h-1V478.2h-1V478.6h-1V478.8h-1V480.3h-1V476.6h-1V468.5h-1V463.5h-1V464.8h-1V465.7h-1V471.1h-1V477.8h-1V474.5h-1V467.0h-1V465.4h-1V472.8h-1V472.6h-1V469.6h-1V468.4h-1V473.7h-1V470.8h-1V461.3h-1V470.3h-1V475.9h-1V462.8h-1V466.9h-1V470.6h-1V458.3h-1V460.3h-1V466.5h-1V456.7h-1V457.0h-1V455.0h-1V454.7h-1V458.5h-1V465.9h-1V458.0h-1V453.5h-1V453.9h-1V455.1h-1V460.9h-1V459.2h-1V473.8h-1V476.2h-1V465.8h-1V467.6h-1V471.5h-1V468.0h-1V470.3h-1V469.7h-1V468.8h-1V459.1h-1V468.9h-1V471.1h-1V466.7h-1V459.5h-1V464.9h-1V458.0h-1V466.9h-1V467.6h-1V474.6h-1V462.2h-1V458.7h-1V458.4h-1V460.4h-1V460.3h-1V456.0h-1V452.8h-1V472.4h-1V458.2h-1V457.2h-1V455.6h-1V451.8h-1V452.2h-1V471.5h-1V473.4h-1V468.3h-1V468.5h-1V457.7h-1V471.9h-1V454.5h-1V454.2h-1V454.4h-1V464.4h-1V467.1h-1V460.2h-1V454.4h-1V474.4h-1V465.2h-1V457.8h-1V469.3h-1V463.0h-1V466.7h-1V457.8h-1V452.1h-1V458.9h-1V452.9h-1V471.2h-1V456.2h-1V470.9h-1V474.6h-1V474.4h-1V458.3h-1V452.5h-1V447.6h-1V472.4h-1V469.7h-1V465.6h-1V447.8h-1V446.2h-1V455.7h-1V456.6h-1V443.6h-1V446.0h-1V432.8h-1V430.7h-1V430.8h-1V433.1h-1V427.4h-1V427.6h-1V428.7h-1V424.1h-1V425.8h-1V421.0h-1V420.8h-1V422.5h-1V424.4h-1V427.6h-1V423.3h-1V418.9h-1V421.3h-1V427.1h-1V424.0h-1V426.9h-1V425.0h-1V425.1h-1V420.4h-1V427.4h-1V420.4h-1V420.4h-1V426.5h-1V419.4h-1V420.6h-1V425.9h-1V427.0h-1V422.7h-1V419.5h-1V427.7h-1V427.6h-1V427.9h-1V419.3h-1V419.5h-1V420.5h-1V418.7h-1V419.1h-1V423.0h-1V423.8h-1V423.3h-1V425.3h-1V428.4h-1V420.8h-1V425.4h-1V426.4h-1V427.3h-1V428.8h-1V429.0h-1V431.4h-1V432.0h-1V429.0h-1V425.5h-1V429.7h-1V430.1h-1V426.8h-1V428.6h-1V432.6h-1V426.5h-1V425.2h-1V423.7h-1V426.3h-1V427.1h-1V432.4h-1V444.8h-1V450.6h-1V450.2h-1V454.5h-1V465.0h-1V467.0h-1V449.3h-1V450.2h-1V455.7h-1V461.8h-1V467.2h-1V451.2h-1V459.3h-1V459.0h-1V461.3h-1V462.1h-1V463.0h-1V470.1h-1V471.8h-1V472.9h-1V476.6h-1V466.0h-1V449.8h-1V468.5h-1V465.7h-1V454.8h-1V469.3h-1V480.1h-1V480.5h-1V459.3h-1V457.8h-1V476.9h-1V477.1h-1V459.3h-1V449.4h-1V461.3h-1V457.0h-1V457.4h-1V470.0h-1V471.1h-1V475.7h-1V471.9h-1V475.8h-1V450.3h-1V474.6h-1V474.7h-1V472.4h-1V469.2h-1V455.5h-1V467.4h-1V471.2h-1V458.4h-1V459.0h-1V460.7h-1V461.2h-1V457.8h-1V463.3h-1V464.0h-1V469.6h-1V464.6h-1V466.5h-1V461.0h-1V455.4h-1V456.3h-1V459.9h-1V466.0h-1V459.6h-1V467.2h-1V461.8h-1V462.9h-1V454.7h-1V464.5h-1V465.6h-1V466.1h-1V462.6h-1V455.4h-1V462.2h-1V474.8h-1V451.0h-1V473.2h-1V477.8h-1V466.6h-1V465.8h-1V448.1h-1V453.1h-1V465.8h-1V468.0h-1V456.7h-1V459.7h-1V454.0h-1V455.4h-1V458.0h-1V465.4h-1V468.7h-1V468.4h-1V474.3h-1V455.2h-1V464.1h-1V467.1h-1V469.4h-1V464.1h-1V462.5h-1V477.1h-1V460.0h-1V470.3h-1V474.7h-1V461.5h-1V473.9h-1V470.2h-1V455.1h-1V466.9h-1V447.6h-1V450.3h-1V467.5h-1V473.3h-1V476.4h-1V476.8h-1V449.4h-1V475.3h-1V464.0h-1V461.5h-1V467.7h-1V476.9h-1V473.3h-1V457.7h-1V452.2h-1V456.3h-1V472.6h-1V455.6h-1V461.6h-1V459.9h-1V466.6h-1V454.6h-1V458.7h-1V464.7h-1V443.8h-1V458.7h-1V460.3h-1V452.9h-1V453.2h-1V443.6h-1V448.1h-1V474.3h-1V476.5h-1V455.7h-1V457.7h-1V445.9h-1V446.2h-1V465.7h-1V461.4h-1V445.2h-1V455.5h-1V456.6h-1V451.9h-1V438.5h-1V438.4h-1V441.4h-1V450.7h-1V454.1h-1V457.2h-1V448.5h-1V452.2h-1V449.2h-1V436.4h-1V454.9h-1V455.6h-1V438.6h-1V462.4h-1V463.1h-1V466.2h-1V442.6h-1V444.3h-1V441.1h-1V450.4h-1V455.7h-1V459.3h-1V441.6h-1V440.9h-1V442.8h-1V445.6h-1V440.7h-1V468.9h-1V459.6h-1V444.7h-1V455.2h-1V445.9h-1V475.2h-1V475.4h-1V451.0h-1V448.0h-1V448.5h-1V448.4h-1V463.1h-1V468.1h-1V474.0h-1V473.0h-1V465.7h-1V464.4h-1V468.0h-1V451.5h-1V449.4h-1V444.7h-1V454.7h-1V454.7h-1V450.0h-1V453.5h-1V454.2h-1V459.4h-1V440.7h-1V437.6h-1V444.1h-1V461.6h-1V462.5h-1V435.2h-1V435.4h-1V428.1h-1V430.1h-1V430.7h-1V432.5h-1V428.9h-1V437.8h-1V439.4h-1V450.4h-1V452.8h-1V435.2h-1V443.7h-1V447.0h-1V423.4h-1V442.9h-1V446.2h-1V441.8h-1V444.1h-1V461.5h-1V447.9h-1V450.1h-1V448.4h-1V425.5h-1V438.0h-1V427.5h-1V429.0h-1V436.3h-1V423.2h-1V421.8h-1V461.1h-1V459.6h-1V438.3h-1V437.1h-1V439.9h-1V463.5h-1V427.9h-1V428.8h-1V430.1h-1V443.0h-1V461.9h-1V463.5h-1V446.0h-1V429.0h-1V422.8h-1V423.1h-1V431.1h-1V432.8h-1V420.5h-1V444.4h-1V438.8h-1V457.4h-1V457.6h-1V458.3h-1V449.7h-1V437.9h-1V425.8h-1V466.1h-1V415.1h-1V456.1h-1V459.4h-1V419.1h-1V419.4h-1V417.5h-1V421.2h-1V425.2h-1V427.4h-1V439.1h-1V435.0h-1V428.8h-1V421.3h-1V438.6h-1V449.5h-1V430.9h-1V419.2h-1V438.2h-1V438.9h-1V436.6h-1V412.6h-1V455.8h-1V461.0h-1V428.8h-1V428.4h-1V429.6h-1V421.8h-1V423.6h-1V414.8h-1V423.1h-1V425.1h-1V431.8h-1V414.3h-1V415.2h-1V435.1h-1V422.8h-1V423.3h-1V433.8h-1V458.4h-1V463.7h-1V439.6h-1V435.4h-1V467.1h-1V449.1h-1V451.0h-1V442.2h-1V444.2h-1V447.2h-1V436.9h-1V444.6h-1V438.3h-1V464.1h-1V468.2h-1V448.2h-1V453.4h-1V459.4h-1V464.3h-1V451.8h-1V453.1h-1V436.0h-1V436.5h-1V430.0h-1V422.5h-1V421.0h-1V443.2h-1V430.9h-1V419.3h-1V433.4h-1V441.0h-1V432.4h-1V427.3h-1V428.2h-1V426.7h-1V426.6h-1V426.3h-1V427.4h-1V430.9h-1V426.7h-1V430.0h-1V422.7h-1V426.9h-1V424.7h-1V421.0h-1V424.2h-1V433.4h-1V437.3h-1V437.7h-1V430.8h-1V441.2h-1V436.6h-1V441.7h-1V443.8h-1V433.9h-1V433.7h-1V435.7h-1V441.5h-1V444.9h-1V432.5h-1V445.4h-1V434.3h-1V435.4h-1V432.5h-1V440.9h-1V437.1h-1V445.9h-1V435.3h-1V434.2h-1V437.9h-1V441.3h-1V436.1h-1V419.7h-1V412.2h-1V410.0h-1V410.5h-1V420.0h-1V434.1h-1V435.3h-1V456.7h-1V459.2h-1V451.5h-1V457.0h-1V446.2h-1V447.0h-1V444.0h-1V450.4h-1V450.9h-1V450.0h-1V449.2h-1V445.1h-1V452.3h-1V450.3h-1V455.8h-1V458.1h-1V453.8h-1V452.0h-1V450.6h-1V451.5h-1V449.2h-1V448.6h-1V448.8h-1V445.5h-1V455.6h-1V445.1h-1V438.1h-1V440.9h-1V445.1h-1V455.2h-1V444.9h-1V449.6h-1V457.3h-1V455.1h-1V457.3h-1V455.2h-1V453.1h-1V446.8h-1V440.0h-1V449.5h-1V428.8h-1V410.3h-1V405.4h-1V418.0h-1V408.8h-1V408.3h-1V412.0h-1V412.6h-1V408.8h-1V413.5h-1V414.1h-1V411.3h-1V420.0h-1V415.3h-1V409.7h-1V412.1h-1V414.8h-1V414.7h-1V412.4h-1V412.9h-1V415.3h-1V416.0h-1V412.4h-1V419.4h-1V412.2h-1V418.2h-1V417.3h-1V411.6h-1V410.4h-1V411.5h-1V409.1h-1V409.9h-1V406.5h-1V405.7h-1V413.6h-1V405.5h-1V412.3h-1V412.4h-1V410.6h-1V411.4h-1V406.5h-1V408.4h-1V408.9h-1V407.5h-1V404.8h-1V405.2h-1V410.4h-1V411.3h-1V406.9h-1V407.2h-1V418.1h-1V407.5h-1V407.4h-1V407.6h-1V411.8h-1V411.3h-1V415.5h-1V417.2h-1V417.8h-1V417.9h-1V411.4h-1V411.3h-1V412.4h-1V408.3h-1V411.6h-1V407.6h-1V408.0h-1V412.5h-1V412.9h-1V416.6h-1V417.0h-1V410.8h-1V409.1h-1V412.8h-1V407.6h-1V409.3h-1V408.2h-1V406.1h-1V406.8h-1V408.4h-1V408.0h-1V405.8h-1V404.9h-1V403.3h-1V401.5h-1V399.9h-1V398.5h-1Z" fill="#085d76"/><path d="M23,397.5V396.8h1V396.8h1V395.3h1V393.6h1V392.9h1V391.6h1V391.0h1V388.6h1V388.2h1V388.7h1V388.8h1V388.8h1V388.8h1V387.6h1V388.0h1V388.0h1V388.0h1V383.4h1V390.8h1V391.3h1V391.3h1V391.3h1V389.6h1V388.4h1V386.1h1V382.9h1V383.8h1V384.3h1V385.0h1V385.5h1V385.5h1V389.8h1V389.8h1V389.8h1V389.6h1V388.3h1V388.3h1V388.3h1V385.0h1V385.0h1V386.8h1V386.8h1V388.3h1V388.4h1V388.4h1V388.4h1V388.5h1V388.5h1V388.5h1V385.7h1V381.1h1V387.4h1V387.4h1V387.4h1V385.3h1V382.4h1V382.4h1V382.6h1V382.6h1V384.8h1V384.8h1V386.0h1V386.0h1V386.0h1V383.7h1V384.2h1V386.9h1V386.9h1V386.9h1V383.6h1V383.6h1V381.0h1V381.1h1V381.7h1V382.7h1V384.6h1V385.5h1V385.5h1V390.4h1V390.4h1V390.4h1V388.5h1V388.5h1V388.5h1V384.6h1V384.6h1V380.2h1V374.0h1V362.8h1V355.4h1V355.4h1V355.5h1V355.5h1V355.5h1V357.0h1V357.0h1V357.0h1V355.3h1V355.3h1V355.3h1V355.3h1V355.5h1V355.8h1V359.5h1V359.5h1V359.5h1V359.4h1V359.4h1V359.4h1V359.2h1V357.2h1V355.8h1V355.8h1V355.8h1V348.1h1V354.9h1V354.9h1V354.9h1V354.8h1V354.8h1V354.3h1V357.9h1V359.8h1V361.5h1V361.5h1V361.5h1V354.5h1V376.0h1V376.5h1V384.5h1V384.5h1V384.5h1V382.5h1V382.5h1V377.4h1V366.8h1V364.2h1V364.3h1V364.3h1V364.3h1V360.4h1V360.3h1V358.9h1V356.7h1V357.4h1V360.1h1V361.5h1V361.5h1V363.3h1V364.1h1V364.1h1V364.1h1V363.7h1V363.7h1V363.7h1V362.7h1V364.1h1V364.1h1V368.6h1V368.6h1V373.9h1V373.9h1V373.9h1V370.8h1V370.8h1V370.8h1V371.7h1V371.7h1V371.7h1V372.6h1V372.6h1V372.6h1V371.1h1V362.6h1V364.9h1V364.9h1V364.9h1V353.7h1V353.7h1V353.7h1V359.2h1V359.2h1V359.2h1V349.2h1V362.7h1V365.3h1V365.3h1V365.3h1V340.8h1V342.3h1V342.3h1V347.9h1V347.9h1V354.6h1V354.6h1V354.6h1V351.1h1V351.1h1V355.3h1V355.3h1V361.9h1V366.7h1V366.7h1V366.7h1V358.8h1V358.8h1V366.3h1V366.3h1V366.3h1V362.6h1V362.6h1V349.0h1V349.0h1V340.8h1V358.4h1V358.4h1V358.4h1V352.7h1V350.1h1V350.1h1V367.0h1V367.0h1V367.0h1V359.2h1V360.9h1V362.8h1V362.8h1V380.9h1V380.9h1V380.9h1V377.2h1V367.8h1V367.8h1V354.0h1V344.0h1V344.0h1V343.9h1V343.9h1V363.2h1V363.2h1V367.5h1V368.0h1V369.5h1V373.7h1V378.1h1V385.7h1V385.7h1V385.7h1V367.7h1V367.7h1V367.7h1V359.3h1V355.1h1V355.1h1V366.9h1V377.3h1V380.7h1V380.7h1V380.7h1V374.1h1V362.9h1V362.9h1V362.9h1V352.1h1V352.1h1V353.2h1V363.8h1V363.8h1V363.8h1V362.0h1V367.7h1V367.7h1V367.7h1V368.5h1V368.5h1V368.5h1V358.5h1V364.6h1V365.7h1V371.7h1V371.7h1V371.7h1V371.5h1V371.5h1V371.5h1V370.7h1V370.7h1V361.6h1V362.9h1V366.1h1V366.3h1V366.3h1V366.3h1V364.9h1V364.9h1V339.6h1V339.6h1V339.6h1V355.2h1V360.2h1V360.2h1V360.2h1V354.6h1V354.6h1V355.3h1V355.3h1V362.4h1V362.4h1V362.4h1V341.0h1V334.4h1V341.0h1V347.7h1V356.4h1V356.4h1V356.4h1V347.2h1V359.1h1V361.7h1V361.7h1V361.7h1V361.3h1V361.3h1V354.0h1V354.0h1V354.0h1V362.5h1V362.5h1V362.5h1V352.6h1V352.6h1V349.8h1V351.6h1V351.6h1V351.6h1V344.1h1V337.8h1V339.3h1V351.2h1V351.9h1V351.9h1V351.9h1V350.8h1V349.8h1V340.0h1V347.1h1V348.6h1V348.6h1V348.6h1V344.4h1V337.4h1V337.4h1V337.4h1V333.6h1V333.6h1V346.7h1V346.7h1V346.9h1V349.6h1V349.6h1V349.8h1V349.8h1V349.8h1V345.2h1V338.9h1V350.7h1V350.7h1V350.7h1V347.2h1V356.1h1V356.1h1V356.1h1V353.3h1V353.0h1V350.2h1V341.8h1V342.2h1V342.8h1V342.8h1V342.8h1V341.2h1V341.2h1V328.0h1V359.4h1V359.4h1V359.4h1V357.3h1V357.3h1V353.8h1V353.8h1V345.0h1V350.2h1V350.2h1V350.2h1V349.2h1V351.2h1V351.2h1V351.2h1V351.1h1V351.1h1V350.1h1V335.4h1V335.4h1V344.5h1V344.5h1V349.0h1V349.0h1V349.0h1V347.7h1V334.8h1V335.4h1V335.4h1V335.4h1V332.3h1V331.2h1V344.4h1V344.4h1V344.4h1V343.5h1V343.6h1V343.6h1V343.6h1V329.6h1V342.5h1V342.5h1V342.5h1V346.5h1V346.5h1V346.5h1V338.4h1V339.6h1V344.3h1V344.3h1V344.3h1V342.8h1V342.8h1V342.8h1V343.7h1V344.0h1V344.0h1V344.0h1V348.5h1V348.5h1V348.5h1V343.4h1V341.0h1V341.0h1V338.7h1V340.8h1V340.8h1V351.3h1V351.3h1V351.3h1V345.1h1V345.1h1V345.1h1V332.2h1V332.2h1V334.9h1V349.4h1V349.4h1V349.4h1V348.3h1V348.3h1V347.7h1V347.7h1V347.7h1V345.5h1V348.0h1V348.0h1V348.0h1V345.3h1V342.7h1V342.7h1V343.3h1V343.3h1V343.3h1V336.1h1V336.1h1V335.1h1V330.6h1V332.3h1V332.4h1V335.9h1V335.9h1V338.2h1V338.2h1V338.2h1V347.8h1V347.8h1V347.8h1V347.7h1V347.7h1V347.7h1V347.0h1V344.7h1V346.8h1V346.8h1V346.8h1V346.9h1V346.9h1V348.0h1V348.0h1V348.0h1V350.9h1V350.9h1V350.9h1V352.4h1V352.4h1V352.4h1V351.6h1V362.1h1V362.1h1V364.2h1V364.2h1V365.2h1V366.0h1V374.1h1V374.7h1V376.6h1V376.6h1V376.9h1V377.0h1V377.0h1V377.0h1V375.8h1V376.6h1V376.6h1V379.2h1V379.8h1V379.8h1V379.8h1V379.6h1V379.6h1V378.3h1V378.3h1V378.3h1V377.3h1V377.3h1V377.3h1V376.5h1V375.6h1V375.6h1V375.6h1V375.2h1V380.0h1V380.0h1V380.0h1V379.4h1V379.4h1V379.1h1V379.1h1V379.1h1V377.2h1V376.4h1V375.0h1V377.6h1V377.7h1V377.7h1V378.8h1V380.5h1V380.6h1V380.6h1V380.6h1V376.8h1V376.8h1V377.0h1V377.0h1V380.3h1V380.3h1V380.3h1V377.5h1V377.5h1V377.5h1V379.7h1V379.7h1V379.7h1V376.6h1V372.2h1V371.0h1V371.0h1V371.0h1V367.5h1V365.7h1V363.8h1V360.0h1V356.3h1V346.2h1V346.2h1V342.3h1V346.5h1V346.5h1V346.5h1V346.4h1V335.2h1V338.4h1V338.4h1V338.4h1V342.7h1V342.7h1V342.7h1V338.4h1V340.3h1V340.3h1V340.3h1V341.5h1V347.9h1V347.9h1V347.9h1V345.1h1V345.7h1V345.7h1V345.7h1V337.1h1V337.1h1V337.6h1V339.6h1V339.6h1V344.9h1V344.9h1V344.9h1V337.0h1V346.7h1V346.7h1V346.7h1V335.5h1V342.2h1V342.2h1V342.2h1V337.7h1V337.7h1V332.8h1V331.9h1V331.9h1V337.3h1V340.8h1V340.8h1V340.8h1V339.2h1V342.5h1V343.4h1V343.4h1V343.4h1V340.0h1V342.2h1V342.2h1V342.2h1V340.5h1V338.3h1V336.3h1V336.3h1V339.6h1V339.6h1V339.6h1V335.0h1V343.0h1V343.0h1V343.0h1V339.5h1V339.5h1V331.1h1V331.5h1V331.5h1V331.5h1V333.0h1V333.0h1V338.0h1V338.0h1V338.0h1V333.9h1V336.2h1V336.2h1V336.2h1V333.7h1V333.7h1V334.0h1V334.0h1V334.0h1V328.7h1V328.7h1V330.8h1V330.8h1V330.8h1V329.9h1V326.9h1V329.5h1V337.8h1V337.8h1V337.8h1V334.3h1V334.3h1V339.6h1V339.6h1V339.6h1V336.4h1V331.3h1V331.3h1V327.8h1V327.8h1V329.1h1V329.1h1V334.1h1V334.1h1V334.1h1V337.8h1V337.8h1V337.8h1V328.9h1V336.7h1V336.7h1V336.7h1V335.5h1V334.2h1V337.7h1V337.7h1V337.7h1V332.1h1V332.5h1V334.8h1V334.8h1V336.4h1V336.4h1V336.4h1V336.1h1V336.1h1V336.1h1V332.8h1V332.8h1V337.0h1V337.0h1V337.0h1V335.0h1V335.0h1V333.8h1V333.8h1V339.3h1V339.3h1V339.3h1V334.3h1V334.3h1V334.3h1V332.6h1V333.2h1V333.2h1V333.2h1V327.5h1V333.4h1V333.4h1V335.1h1V335.1h1V335.1h1V333.8h1V333.9h1V333.9h1V333.9h1V328.9h1V328.9h1V332.3h1V332.3h1V332.3h1V327.3h1V326.0h1V324.3h1V328.7h1V328.7h1V328.7h1V326.1h1V329.9h1V329.9h1V329.9h1V329.4h1V329.4h1V328.3h1V325.3h1V325.3h1V325.3h1V327.2h1V327.2h1V327.2h1V332.1h1V332.1h1V333.9h1V333.9h1V333.9h1V325.1h1V330.8h1V330.8h1V330.8h1V326.6h1V326.6h1V329.4h1V329.4h1V329.4h1V325.8h1V326.5h1V326.5h1V327.8h1V331.5h1V335.1h1V335.1h1V335.1h1V319.3h1V326.5h1V326.5h1V330.4h1V331.9h1V331.9h1V331.9h1V328.0h1V328.0h1V323.1h1V321.7h1V329.2h1V329.2h1V329.7h1V329.8h1V329.8h1V329.8h1V331.7h1V331.7h1V331.7h1V331.6h1V320.6h1V323.6h1V323.6h1V324.6h1V324.6h1V324.6h1V334.2h1V334.2h1V334.2h1V333.8h1V334.2h1V334.2h1V334.2h1V333.2h1V322.0h1V325.0h1V325.0h1V325.3h1V327.9h1V330.8h1V331.0h1V331.0h1V331.0h1V328.3h1V330.8h1V330.8h1V330.8h1V329.8h1V329.9h1V329.9h1V331.2h1V331.2h1V331.2h1V325.6h1V327.2h1V331.2h1V331.2h1V331.2h1V325.5h1V329.7h1V329.7h1V331.0h1V331.0h1V331.0h1V329.9h1V329.2h1V329.2h1V329.2h1V323.7h1V323.7h1V323.1h1V323.7h1V324.0h1V324.0h1V326.9h1V329.0h1V330.0h1V330.9h1V330.9h1V330.9h1V328.2h1V332.3h1V332.3h1V332.3h1V327.7h1V327.7h1V331.3h1V331.3h1V331.3h1V329.4h1V325.7h1V325.5h1V324.7h1V324.7h1V324.7h1V325.7h1V325.7h1V325.7h1V327.3h1V327.3h1V327.3h1V325.8h1V325.8h1V325.8h1V325.7h1V325.7h1V333.5h1V333.5h1V333.5h1V332.7h1V332.7h1V323.9h1V323.9h1V325.2h1V325.8h1V325.8h1V326.2h1V328.1h1V328.1h1V328.1h1V326.1h1V333.4h1V333.4h1V333.4h1V332.9h1V332.9h1V332.9h1V332.6h1V331.0h1V328.2h1V329.0h1V331.3h1V331.3h1V331.3h1V327.8h1V326.1h1V326.1h1V322.7h1V330.5h1V330.5h1V330.5h1V329.6h1V329.6h1V329.6h1V325.8h1V325.6h1V325.6h1V325.6h1V333.7h1V333.7h1V333.7h1V331.2h1V326.9h1V326.9h1V333.7h1V333.7h1V333.7h1V326.4h1V325.5h1V330.1h1V330.1h1V330.1h1V325.7h1V325.7h1V325.7h1V328.9h1V328.9h1V329.0h1V329.0h1V329.0h1V322.2h1V327.1h1V327.1h1V327.1h1V329.1h1V329.1h1V329.1h1V327.9h1V332.3h1V332.3h1V332.3h1V328.5h1V328.5h1V325.4h1V327.9h1V327.9h1V327.9h1V329.1h1V331.8h1V331.8h1V334.0h1V334.0h1V334.0h1V330.0h1V330.4h1V330.4h1V330.4h1V330.3h1V332.5h1V332.5h1V332.5h1V330.7h1V330.7h1V331.0h1V331.0h1V331.0h1V326.5h1V322.8h1V318.8h1V322.0h1V327.6h1V327.6h1V327.6h1V323.8h1V330.5h1V330.5h1V330.5h1V329.2h1V329.2h1V329.2h1V327.4h1V330.0h1V330.0h1V330.0h1V331.2h1V331.2h1V332.9h1V332.9h1V332.9h1V330.1h1V330.1h1V321.3h1V325.4h1V325.4h1V325.7h1V325.7h1V325.7h1V329.0h1V329.0h1V329.0h1V331.3h1V331.3h1V331.3h1V330.6h1V331.8h1V331.8h1V331.8h1V329.0h1V335.6h1V335.6h1V335.6h1V333.7h1V333.7h1V333.3h1V333.3h1V330.7h1V330.7h1V328.5h1V328.1h1V328.1h1V326.0h1V333.4h1V333.4h1V333.4h1V332.5h1V332.5h1V332.2h1V332.2h1V327.4h1V326.6h1V333.6h1V333.6h1V333.6h1V335.5h1V335.5h1V335.5h1V334.6h1V321.5h1V331.1h1V331.1h1V331.1h1V327.2h1V322.6h1V322.6h1V329.2h1V329.2h1V329.2h1V329.0h1V329.0h1V329.0h1V322.9h1V330.4h1V335.2h1V335.2h1V335.2h1V334.2h1V330.0h1V333.5h1V333.5h1V333.5h1V333.0h1V331.7h1V331.7h1V331.7h1V328.9h1V330.3h1V330.4h1V338.4h1V338.4h1V338.4h1V336.4h1V330.1h1V332.5h1V332.5h1V332.5h1V334.7h1V334.7h1V334.7h1V334.0h1V337.7h1V338.9h1V338.9h1V338.9h1V335.3h1V337.0h1V377.7h1V377.7h1V377.7h1V332.8h1V375.9h1V375.9h1V375.9h1V337.5h1V333.3h1V363.3h1V363.3h1V363.3h1V331.1h1V341.6h1V341.6h1V341.6h1V332.9h1V340.0h1V340.0h1V340.0h1V335.8h1V335.8h1V335.8h1V329.3h1V328.1h1V328.1h1V328.1h1V372.3h1V372.3h1V372.3h1V332.7h1V335.3h1V335.3h1V335.3h1V332.2h1V334.9h1V335.4h1V340.7h1V340.7h1V340.7h1V338.2h1V334.6h1V330.7h1V372.3h1V372.3h1V372.3h1V338.5h1V338.5h1V338.2h1V338.2h1V338.2h1V337.6h1V337.5h1V336.4h1V333.9h1V331.8h1V331.2h1V327.6h1V327.6h1V327.7h1V329.0h1V330.5h1V340.0h1V340.0h1V340.0h1V330.3h1V330.3h1V334.9h1V339.7h1V363.3h1V363.3h1V363.3h1V337.8h1V334.0h1V333.0h1V339.3h1V341.0h1V342.7h1V342.7h1V370.5h1V370.5h1V370.5h1V340.8h1V338.3h1V338.3h1V368.7h1V368.7h1V368.7h1V329.7h1V329.5h1V334.0h1V335.1h1V337.3h1V337.3h1V337.3h1V362.4h1V362.4h1V362.4h1V327.2h1V333.7h1V333.7h1V333.7h1V329.0h1V335.8h1V338.2h1V338.2h1V338.2h1V334.1h1V334.1h1V334.1h1V334.3h1V334.3h1V334.5h1V334.5h1V335.3h1V335.3h1V335.3h1V335.5h1V335.5h1V335.5h1V338.1h1V339.5h1V339.5h1V339.5h1V338.1h1V338.1h1V336.8h1V330.8h1V330.8h1V330.8h1V325.3h1V330.9h1V336.6h1V336.6h1V336.6h1V336.4h1V336.4h1V336.2h1V335.5h1V334.1h1V334.1h1V333.8h1V328.8h1V332.2h1V332.2h1V332.2h1V329.3h1V330.9h1V334.8h1V334.8h1V334.8h1V334.8h1V334.8h1V335.4h1V335.4h1V335.4h1V332.8h1V326.4h1V326.4h1V336.4h1V336.4h1V336.4h1V335.2h1V335.2h1V335.2h1V328.0h1V328.0h1V334.8h1V334.8h1V334.8h1V329.5h1V328.7h1V328.7h1V328.7h1V331.2h1V331.2h1V331.2h1V327.0h1V328.0h1V328.0h1V328.0h1V325.4h1V325.4h1V329.3h1V329.3h1V329.3h1V325.1h1V323.7h1V323.7h1V324.6h1V330.0h1V330.0h1V331.3h1V331.3h1V331.3h1V326.1h1V326.1h1V326.1h1V327.1h1V329.0h1V329.0h1V329.0h1V325.7h1V325.7h1V325.0h1V324.9h1V330.8h1V330.8h1V331.8h1V331.8h1V331.8h1V332.7h1V332.7h1V335.8h1V335.8h1V335.8h1V327.0h1V327.0h1V329.7h1V330.0h1V331.6h1V331.6h1V331.6h1V330.0h1V330.0h1V332.3h1V332.3h1V332.3h1V329.8h1V329.8h1V333.2h1V333.2h1V333.2h1V322.1h1V330.3h1V330.3h1V330.3h1V328.3h1V328.3h1V323.3h1V322.7h1V322.7h1V323.4h1V332.3h1V332.3h1V332.3h1V330.0h1V333.2h1V333.2h1V333.2h1V333.2h1V332.1h1V332.9h1V332.9h1V332.9h1V331.5h1V331.5h1V331.5h1V330.7h1V330.8h1V330.8h1V330.8h1V320.5h1V321.5h1V328.5h1V332.2h1V332.2h1V332.2h1V333.0h1V333.0h1V333.0h1V325.0h1V330.0h1V331.6h1V332.0h1V332.0h1V332.0h1V329.3h1V328.1h1V329.4h1V329.4h1V329.4h1V322.7h1V328.0h1V328.0h1V328.0h1V323.2h1V323.9h1V330.0h1V330.0h1V330.5h1V332.3h1V332.3h1V332.3h1V331.9h1V331.9h1V324.6h1V325.4h1V325.4h1V325.4h1V323.4h1V322.9h1V324.4h1V324.4h1V324.4h1V332.1h1V332.1h1V332.1h1V331.5h1V331.5h1V331.5h1V331.9h1V331.9h1V333.8h1V347.0h1V352.5h1V352.5h1V355.6h1V361.6h1V367.5h1V367.7h1V370.4h1V376.6h1V377.8h1V377.8h1V377.8h1V378.6h1V378.6h1V378.6h1V376.0h1V377.2h1V381.4h1V381.4h1V381.4h1V381.9h1V381.9h1V381.9h1V383.5h1V383.5h1V383.5h1V383.2h1V383.2h1V381.2h1V381.2h1V378.1h1V379.7h1V379.7h1V379.7h1V380.2h1V380.2h1V380.2h1V379.1h1V380.8h1V380.8h1V380.8h1V377.6h1V377.9h1V382.0h1V382.0h1V382.0h1V377.7h1V379.7h1V383.8h1V383.8h1V383.8h1V379.7h1V379.7h1V380.2h1V380.2h1V382.8h1V383.4h1V383.8h1V383.8h1V383.8h1V383.6h1V383.6h1V380.2h1V382.5h1V382.9h1V382.9h1V382.9h1V382.8h1V382.8h1V382.8h1V384.9h1V384.9h1V385.2h1V385.2h1V385.2h1V379.1h1V379.1h1V379.1h1V378.0h1V378.0h1V377.5h1V379.0h1V381.4h1V381.4h1V384.2h1V384.2h1V384.2h1V383.2h1V380.1h1V380.1h1V383.3h1V383.3h1V383.3h1V381.4h1V384.8h1V384.8h1V384.8h1V384.4h1V382.9h1V382.9h1V382.9h1V381.2h1V381.5h1V381.5h1V381.5h1V381.1h1V384.5h1V384.5h1V384.5h1V384.1h1V382.2h1V382.2h1V381.9h1V397.5V409.1h-1V409.1h-1V409.6h-1V410.8h-1V410.8h-1V410.8h-1V411.6h-1V409.7h-1V409.7h-1V409.7h-1V408.5h-1V408.5h-1V408.5h-1V409.4h-1V411.1h-1V411.1h-1V410.7h-1V410.7h-1V410.7h-1V411.1h-1V412.6h-1V413.0h-1V413.5h-1V413.5h-1V413.5h-1V408.6h-1V408.6h-1V408.6h-1V409.9h-1V409.9h-1V410.1h-1V410.1h-1V410.3h-1V410.5h-1V414.2h-1V414.2h-1V412.9h-1V412.6h-1V412.6h-1V412.6h-1V415.7h-1V416.1h-1V416.1h-1V414.8h-1V414.7h-1V413.0h-1V413.0h-1V413.0h-1V413.1h-1V412.5h-1V412.5h-1V412.5h-1V416.8h-1V416.8h-1V417.5h-1V420.8h-1V421.2h-1V418.2h-1V418.2h-1V418.2h-1V416.0h-1V415.3h-1V415.3h-1V411.9h-1V411.9h-1V411.9h-1V417.4h-1V418.3h-1V421.2h-1V415.0h-1V415.0h-1V415.0h-1V419.0h-1V415.1h-1V415.1h-1V414.0h-1V414.0h-1V414.0h-1V423.3h-1V418.6h-1V418.2h-1V418.2h-1V416.9h-1V414.7h-1V414.7h-1V414.7h-1V414.9h-1V419.0h-1V419.0h-1V421.1h-1V421.1h-1V418.0h-1V418.0h-1V418.0h-1V422.8h-1V425.6h-1V416.9h-1V416.9h-1V416.9h-1V418.5h-1V418.5h-1V423.4h-1V422.1h-1V422.1h-1V422.1h-1V426.6h-1V429.1h-1V439.2h-1V437.9h-1V437.9h-1V437.9h-1V442.8h-1V450.1h-1V453.9h-1V453.9h-1V461.0h-1V461.0h-1V461.0h-1V469.1h-1V469.1h-1V463.2h-1V463.2h-1V463.2h-1V460.8h-1V460.8h-1V460.8h-1V465.3h-1V465.3h-1V465.3h-1V465.3h-1V471.7h-1V471.7h-1V469.4h-1V469.4h-1V469.4h-1V465.7h-1V465.7h-1V463.6h-1V463.6h-1V463.6h-1V464.3h-1V464.3h-1V464.3h-1V470.0h-1V470.0h-1V471.6h-1V471.6h-1V472.4h-1V472.4h-1V472.4h-1V472.4h-1V467.4h-1V467.4h-1V464.0h-1V464.0h-1V464.0h-1V466.4h-1V466.0h-1V466.0h-1V466.0h-1V463.1h-1V463.1h-1V463.1h-1V464.0h-1V468.4h-1V466.0h-1V463.3h-1V463.3h-1V463.3h-1V463.6h-1V470.3h-1V464.2h-1V464.2h-1V460.7h-1V460.7h-1V460.7h-1V462.2h-1V467.8h-1V467.8h-1V467.8h-1V473.6h-1V467.5h-1V467.5h-1V465.8h-1V465.8h-1V465.8h-1V464.0h-1V464.0h-1V464.0h-1V462.1h-1V461.2h-1V461.2h-1V461.2h-1V466.7h-1V464.0h-1V464.0h-1V462.5h-1V462.5h-1V462.5h-1V465.2h-1V464.2h-1V464.2h-1V463.2h-1V462.3h-1V462.3h-1V462.3h-1V462.6h-1V466.8h-1V466.8h-1V466.1h-1V463.0h-1V463.0h-1V463.0h-1V468.2h-1V468.2h-1V468.2h-1V466.5h-1V461.5h-1V459.2h-1V459.2h-1V459.2h-1V463.8h-1V465.9h-1V469.1h-1V471.0h-1V459.5h-1V459.5h-1V459.5h-1V460.5h-1V460.5h-1V460.5h-1V463.2h-1V463.2h-1V465.1h-1V462.8h-1V462.8h-1V462.8h-1V463.4h-1V468.8h-1V466.0h-1V464.3h-1V464.3h-1V462.4h-1V459.1h-1V459.1h-1V459.1h-1V459.7h-1V459.7h-1V466.1h-1V464.6h-1V464.6h-1V464.6h-1V462.4h-1V462.4h-1V462.4h-1V464.3h-1V462.4h-1V462.4h-1V462.4h-1V465.5h-1V465.5h-1V469.8h-1V466.0h-1V464.2h-1V464.2h-1V464.2h-1V467.4h-1V467.4h-1V467.4h-1V467.4h-1V470.4h-1V472.6h-1V463.2h-1V463.2h-1V463.2h-1V465.0h-1V465.8h-1V466.0h-1V465.4h-1V465.4h-1V465.4h-1V466.0h-1V468.4h-1V465.0h-1V465.0h-1V465.0h-1V457.4h-1V457.4h-1V457.4h-1V465.1h-1V465.1h-1V465.1h-1V465.1h-1V466.9h-1V466.9h-1V459.6h-1V459.6h-1V459.6h-1V460.1h-1V460.8h-1V462.9h-1V462.9h-1V462.9h-1V460.7h-1V460.7h-1V460.3h-1V460.3h-1V460.3h-1V463.4h-1V463.4h-1V460.4h-1V460.4h-1V460.4h-1V465.1h-1V465.1h-1V465.1h-1V465.9h-1V465.1h-1V461.5h-1V459.7h-1V459.7h-1V459.7h-1V465.4h-1V464.0h-1V464.0h-1V464.0h-1V468.2h-1V470.2h-1V464.3h-1V429.9h-1V429.9h-1V429.9h-1V465.2h-1V460.2h-1V457.1h-1V457.1h-1V457.1h-1V458.7h-1V458.7h-1V424.5h-1V424.5h-1V424.5h-1V455.2h-1V455.2h-1V455.2h-1V433.5h-1V433.5h-1V433.5h-1V463.7h-1V463.1h-1V461.2h-1V461.2h-1V461.2h-1V461.5h-1V464.4h-1V428.1h-1V428.1h-1V428.1h-1V462.5h-1V457.4h-1V457.4h-1V457.4h-1V461.6h-1V456.8h-1V456.8h-1V456.8h-1V449.1h-1V449.1h-1V449.1h-1V452.0h-1V452.0h-1V452.0h-1V457.9h-1V458.5h-1V458.5h-1V458.9h-1V457.0h-1V453.8h-1V449.6h-1V449.6h-1V449.6h-1V418.2h-1V418.2h-1V418.2h-1V447.7h-1V448.7h-1V450.8h-1V456.1h-1V451.8h-1V451.8h-1V449.8h-1V449.8h-1V449.8h-1V457.9h-1V454.0h-1V454.0h-1V454.0h-1V417.3h-1V417.3h-1V417.3h-1V446.7h-1V453.9h-1V454.8h-1V453.2h-1V453.2h-1V453.2h-1V460.6h-1V460.6h-1V460.6h-1V455.3h-1V454.7h-1V454.7h-1V453.9h-1V453.9h-1V453.9h-1V423.6h-1V423.6h-1V423.6h-1V453.1h-1V449.7h-1V423.6h-1V423.6h-1V423.6h-1V449.7h-1V417.3h-1V417.3h-1V417.3h-1V450.5h-1V450.5h-1V453.6h-1V453.0h-1V453.0h-1V453.0h-1V454.8h-1V453.6h-1V453.6h-1V453.6h-1V456.4h-1V455.6h-1V455.6h-1V455.6h-1V455.6h-1V453.9h-1V453.9h-1V453.9h-1V457.1h-1V457.1h-1V457.5h-1V457.6h-1V457.6h-1V457.6h-1V459.0h-1V459.0h-1V459.0h-1V465.1h-1V465.1h-1V468.0h-1V468.0h-1V461.5h-1V461.5h-1V461.5h-1V462.0h-1V463.2h-1V458.5h-1V458.5h-1V458.5h-1V458.2h-1V458.2h-1V458.2h-1V463.4h-1V466.8h-1V462.0h-1V462.0h-1V462.0h-1V462.2h-1V468.0h-1V464.7h-1V460.1h-1V460.1h-1V460.1h-1V468.1h-1V464.7h-1V464.7h-1V463.9h-1V460.2h-1V460.2h-1V460.2h-1V463.0h-1V463.0h-1V464.1h-1V467.0h-1V463.7h-1V463.7h-1V463.7h-1V465.4h-1V465.8h-1V467.2h-1V461.2h-1V461.2h-1V461.2h-1V462.3h-1V462.3h-1V461.1h-1V461.1h-1V461.1h-1V463.1h-1V465.2h-1V465.2h-1V458.1h-1V458.1h-1V458.1h-1V460.8h-1V461.5h-1V461.5h-1V462.2h-1V458.4h-1V458.4h-1V458.4h-1V464.5h-1V458.8h-1V458.8h-1V458.8h-1V461.4h-1V461.4h-1V465.5h-1V467.6h-1V468.2h-1V461.1h-1V461.1h-1V461.1h-1V463.4h-1V460.2h-1V460.2h-1V460.2h-1V463.5h-1V463.5h-1V463.5h-1V465.2h-1V467.6h-1V468.0h-1V465.1h-1V462.2h-1V462.2h-1V462.2h-1V464.0h-1V461.8h-1V461.8h-1V461.8h-1V466.2h-1V462.6h-1V462.6h-1V462.6h-1V461.6h-1V461.6h-1V461.6h-1V471.6h-1V469.8h-1V469.8h-1V469.8h-1V465.1h-1V465.1h-1V465.1h-1V463.2h-1V463.2h-1V463.2h-1V468.3h-1V463.5h-1V463.5h-1V463.5h-1V466.8h-1V468.4h-1V468.4h-1V465.2h-1V465.2h-1V465.2h-1V468.9h-1V469.2h-1V462.4h-1V462.4h-1V462.4h-1V464.1h-1V467.8h-1V465.7h-1V465.6h-1V465.6h-1V465.6h-1V464.8h-1V464.8h-1V462.2h-1V462.2h-1V461.7h-1V461.7h-1V461.7h-1V463.1h-1V463.1h-1V465.2h-1V465.2h-1V468.3h-1V468.3h-1V464.7h-1V461.9h-1V461.0h-1V461.0h-1V461.0h-1V466.1h-1V468.3h-1V468.3h-1V467.2h-1V467.2h-1V467.2h-1V467.5h-1V465.3h-1V465.3h-1V465.3h-1V466.4h-1V466.4h-1V466.5h-1V466.5h-1V466.5h-1V469.7h-1V469.7h-1V469.7h-1V463.8h-1V463.8h-1V463.8h-1V463.3h-1V463.3h-1V463.3h-1V465.4h-1V465.4h-1V462.9h-1V462.9h-1V462.9h-1V463.5h-1V463.5h-1V472.0h-1V466.7h-1V466.7h-1V466.7h-1V467.5h-1V467.5h-1V459.5h-1V459.2h-1V459.2h-1V459.2h-1V469.5h-1V469.5h-1V471.7h-1V460.2h-1V460.2h-1V460.2h-1V466.5h-1V470.7h-1V462.5h-1V462.5h-1V462.5h-1V461.0h-1V461.0h-1V461.0h-1V466.0h-1V460.6h-1V460.6h-1V460.6h-1V463.2h-1V468.1h-1V461.7h-1V461.2h-1V461.2h-1V461.2h-1V461.8h-1V461.8h-1V465.8h-1V465.8h-1V462.0h-1V462.0h-1V462.0h-1V466.4h-1V466.4h-1V466.4h-1V468.4h-1V468.4h-1V471.6h-1V471.6h-1V469.2h-1V469.2h-1V463.8h-1V463.8h-1V463.8h-1V465.7h-1V460.7h-1V460.7h-1V460.7h-1V466.1h-1V465.0h-1V462.6h-1V462.6h-1V462.6h-1V464.7h-1V464.7h-1V464.7h-1V462.8h-1V462.8h-1V462.8h-1V467.8h-1V467.4h-1V467.4h-1V461.3h-1V461.3h-1V461.3h-1V466.5h-1V461.6h-1V460.5h-1V460.5h-1V460.5h-1V462.9h-1V465.9h-1V467.5h-1V463.4h-1V463.4h-1V463.4h-1V466.2h-1V461.0h-1V461.0h-1V459.2h-1V459.2h-1V459.2h-1V461.2h-1V461.2h-1V466.8h-1V466.8h-1V466.8h-1V467.0h-1V459.8h-1V459.8h-1V459.8h-1V461.0h-1V461.0h-1V459.8h-1V459.8h-1V459.8h-1V459.8h-1V463.2h-1V463.2h-1V463.2h-1V464.7h-1V464.7h-1V464.7h-1V467.2h-1V464.7h-1V462.1h-1V462.1h-1V462.1h-1V465.0h-1V468.4h-1V468.4h-1V461.1h-1V461.1h-1V461.1h-1V461.8h-1V461.5h-1V459.1h-1V459.1h-1V458.9h-1V458.9h-1V458.9h-1V463.0h-1V463.0h-1V463.4h-1V463.4h-1V463.5h-1V465.7h-1V466.9h-1V466.9h-1V465.5h-1V465.5h-1V462.4h-1V462.4h-1V462.4h-1V464.1h-1V463.9h-1V463.9h-1V463.9h-1V469.1h-1V462.0h-1V462.0h-1V462.0h-1V464.7h-1V463.4h-1V463.4h-1V457.1h-1V457.1h-1V457.1h-1V459.2h-1V459.2h-1V462.5h-1V459.2h-1V459.2h-1V459.2h-1V462.6h-1V462.6h-1V462.6h-1V467.6h-1V463.8h-1V463.8h-1V463.8h-1V464.4h-1V463.1h-1V463.1h-1V460.5h-1V460.5h-1V460.5h-1V458.6h-1V458.6h-1V458.6h-1V458.6h-1V458.6h-1V458.6h-1V466.5h-1V467.9h-1V455.2h-1V455.2h-1V455.2h-1V455.8h-1V456.6h-1V458.0h-1V458.0h-1V462.3h-1V462.3h-1V460.5h-1V457.4h-1V457.4h-1V457.4h-1V456.8h-1V456.8h-1V456.8h-1V457.3h-1V457.3h-1V459.7h-1V459.7h-1V459.7h-1V465.5h-1V465.5h-1V460.6h-1V460.6h-1V456.6h-1V456.6h-1V456.6h-1V461.3h-1V461.3h-1V463.9h-1V459.7h-1V459.7h-1V455.5h-1V455.5h-1V455.5h-1V466.0h-1V468.1h-1V464.2h-1V464.2h-1V464.2h-1V470.1h-1V470.5h-1V468.7h-1V461.4h-1V456.9h-1V456.9h-1V456.9h-1V458.1h-1V458.9h-1V463.7h-1V460.1h-1V458.6h-1V458.6h-1V458.6h-1V462.4h-1V461.3h-1V461.3h-1V461.3h-1V454.9h-1V454.9h-1V454.9h-1V456.3h-1V456.3h-1V456.3h-1V452.2h-1V452.2h-1V452.2h-1V450.8h-1V450.8h-1V449.3h-1V449.0h-1V449.0h-1V449.0h-1V451.9h-1V447.9h-1V447.9h-1V447.9h-1V448.3h-1V449.3h-1V453.1h-1V453.1h-1V458.9h-1V458.9h-1V458.9h-1V460.6h-1V460.9h-1V460.9h-1V461.6h-1V453.0h-1V453.0h-1V453.0h-1V459.8h-1V453.3h-1V453.3h-1V452.0h-1V452.0h-1V452.0h-1V460.0h-1V455.7h-1V452.6h-1V452.3h-1V452.3h-1V452.3h-1V450.2h-1V447.2h-1V447.2h-1V447.2h-1V451.2h-1V449.8h-1V446.3h-1V446.3h-1V446.3h-1V446.8h-1V461.2h-1V461.2h-1V451.7h-1V451.7h-1V448.8h-1V448.5h-1V448.5h-1V448.5h-1V448.7h-1V454.0h-1V448.7h-1V448.7h-1V448.7h-1V451.7h-1V451.7h-1V451.7h-1V456.4h-1V451.7h-1V446.6h-1V446.6h-1V446.6h-1V447.4h-1V447.4h-1V450.3h-1V450.3h-1V463.6h-1V452.3h-1V447.0h-1V442.6h-1V442.6h-1V442.6h-1V458.8h-1V442.8h-1V441.3h-1V441.3h-1V441.3h-1V439.0h-1V439.0h-1V429.3h-1V427.4h-1V427.4h-1V427.4h-1V424.4h-1V424.4h-1V424.4h-1V421.4h-1V421.4h-1V418.6h-1V418.4h-1V418.4h-1V418.4h-1V420.0h-1V420.7h-1V416.7h-1V416.7h-1V416.7h-1V418.9h-1V421.3h-1V421.3h-1V422.3h-1V418.2h-1V418.2h-1V418.1h-1V418.1h-1V418.1h-1V417.2h-1V417.2h-1V417.2h-1V418.3h-1V420.2h-1V417.3h-1V417.3h-1V417.3h-1V424.6h-1V417.1h-1V417.1h-1V417.1h-1V416.6h-1V416.6h-1V416.6h-1V416.9h-1V420.5h-1V420.7h-1V420.7h-1V418.5h-1V418.5h-1V418.5h-1V422.7h-1V423.5h-1V424.3h-1V425.7h-1V425.8h-1V425.9h-1V422.7h-1V422.7h-1V422.7h-1V423.8h-1V423.8h-1V423.8h-1V423.6h-1V422.4h-1V421.1h-1V421.1h-1V421.1h-1V423.4h-1V424.2h-1V428.9h-1V440.1h-1V445.0h-1V445.0h-1V448.8h-1V444.1h-1V444.1h-1V444.1h-1V445.0h-1V449.9h-1V445.8h-1V445.8h-1V445.8h-1V452.8h-1V452.8h-1V454.9h-1V455.7h-1V456.4h-1V462.8h-1V464.4h-1V459.2h-1V444.6h-1V444.6h-1V444.6h-1V449.1h-1V449.1h-1V449.1h-1V462.1h-1V453.1h-1V451.8h-1V451.8h-1V451.8h-1V453.2h-1V444.2h-1V444.2h-1V444.2h-1V451.1h-1V451.1h-1V451.4h-1V462.8h-1V463.8h-1V464.4h-1V445.0h-1V445.0h-1V445.0h-1V464.9h-1V462.0h-1V449.7h-1V449.7h-1V449.7h-1V452.3h-1V452.3h-1V452.3h-1V452.9h-1V451.8h-1V451.8h-1V451.8h-1V456.7h-1V457.4h-1V457.9h-1V454.7h-1V449.7h-1V449.7h-1V449.7h-1V450.4h-1V453.4h-1V453.4h-1V453.4h-1V455.4h-1V449.0h-1V449.0h-1V449.0h-1V457.8h-1V456.1h-1V449.6h-1V449.6h-1V449.6h-1V445.7h-1V445.7h-1V445.7h-1V459.7h-1V459.0h-1V443.1h-1V443.1h-1V443.1h-1V447.6h-1V450.8h-1V450.8h-1V448.3h-1V448.3h-1V448.3h-1V449.6h-1V452.0h-1V458.6h-1V461.3h-1V449.5h-1V449.5h-1V449.5h-1V457.4h-1V457.4h-1V456.0h-1V456.0h-1V453.8h-1V453.8h-1V453.8h-1V455.1h-1V455.1h-1V455.1h-1V449.3h-1V449.3h-1V442.6h-1V442.6h-1V442.6h-1V445.0h-1V460.5h-1V465.7h-1V444.2h-1V444.2h-1V444.2h-1V455.1h-1V455.1h-1V455.1h-1V460.7h-1V451.7h-1V446.7h-1V446.7h-1V446.7h-1V449.8h-1V449.8h-1V449.8h-1V453.7h-1V448.9h-1V448.9h-1V448.9h-1V439.2h-1V439.2h-1V439.2h-1V447.4h-1V447.4h-1V439.0h-1V439.0h-1V439.0h-1V443.1h-1V449.9h-1V449.9h-1V441.0h-1V441.0h-1V441.0h-1V441.4h-1V440.5h-1V440.5h-1V440.5h-1V446.5h-1V434.4h-1V434.3h-1V434.3h-1V434.3h-1V437.0h-1V445.4h-1V443.4h-1V443.4h-1V443.4h-1V432.5h-1V432.5h-1V432.5h-1V434.5h-1V434.5h-1V434.5h-1V456.0h-1V438.1h-1V438.1h-1V436.8h-1V436.8h-1V436.8h-1V445.1h-1V437.2h-1V436.5h-1V436.5h-1V436.5h-1V436.4h-1V436.4h-1V436.4h-1V439.9h-1V439.9h-1V439.9h-1V441.1h-1V441.1h-1V445.7h-1V443.0h-1V443.0h-1V443.0h-1V443.3h-1V443.3h-1V456.6h-1V461.1h-1V458.9h-1V457.7h-1V457.7h-1V446.1h-1V444.2h-1V439.9h-1V439.9h-1V439.9h-1V444.8h-1V444.8h-1V444.8h-1V447.9h-1V436.4h-1V433.6h-1V433.6h-1V433.6h-1V439.4h-1V431.4h-1V431.4h-1V425.0h-1V425.0h-1V425.0h-1V426.9h-1V425.8h-1V425.8h-1V425.8h-1V433.8h-1V435.2h-1V431.4h-1V431.4h-1V431.4h-1V420.8h-1V420.8h-1V420.8h-1V437.4h-1V437.4h-1V437.4h-1V439.5h-1V442.9h-1V442.9h-1V422.7h-1V422.7h-1V422.7h-1V424.5h-1V424.5h-1V420.6h-1V419.3h-1V419.3h-1V419.3h-1V434.2h-1V433.1h-1V433.1h-1V433.1h-1V424.8h-1V424.8h-1V424.8h-1V425.7h-1V426.9h-1V438.5h-1V441.1h-1V425.9h-1V420.3h-1V420.3h-1V420.3h-1V420.6h-1V418.2h-1V418.2h-1V418.2h-1V434.7h-1V434.7h-1V451.4h-1V444.5h-1V433.9h-1V423.0h-1V423.0h-1V413.3h-1V413.3h-1V413.3h-1V416.9h-1V416.9h-1V415.5h-1V415.5h-1V415.5h-1V418.9h-1V422.4h-1V424.4h-1V425.7h-1V418.9h-1V418.9h-1V418.9h-1V427.6h-1V417.0h-1V417.0h-1V417.0h-1V432.7h-1V411.1h-1V411.1h-1V411.1h-1V425.6h-1V425.3h-1V425.3h-1V419.4h-1V419.4h-1V413.0h-1V413.0h-1V413.0h-1V420.6h-1V412.6h-1V412.6h-1V412.6h-1V413.4h-1V420.3h-1V420.3h-1V420.7h-1V430.2h-1V435.4h-1V431.6h-1V431.6h-1V431.6h-1V444.0h-1V437.8h-1V437.8h-1V437.8h-1V433.0h-1V433.0h-1V433.0h-1V434.2h-1V434.2h-1V443.1h-1V443.1h-1V443.1h-1V447.8h-1V446.4h-1V446.4h-1V432.1h-1V432.1h-1V426.8h-1V420.0h-1V418.6h-1V418.6h-1V418.6h-1V417.1h-1V417.1h-1V417.1h-1V428.9h-1V424.3h-1V424.3h-1V423.8h-1V423.7h-1V423.5h-1V423.5h-1V423.5h-1V423.8h-1V423.8h-1V420.2h-1V420.2h-1V420.2h-1V418.7h-1V418.7h-1V418.7h-1V421.5h-1V429.8h-1V427.5h-1V427.5h-1V427.5h-1V432.7h-1V432.7h-1V430.2h-1V430.1h-1V430.1h-1V430.1h-1V431.9h-1V429.0h-1V429.0h-1V429.0h-1V430.6h-1V429.0h-1V429.0h-1V429.0h-1V433.1h-1V431.5h-1V430.5h-1V430.5h-1V430.5h-1V432.3h-1V417.5h-1V410.7h-1V408.7h-1V408.7h-1V408.7h-1V409.2h-1V417.7h-1V430.4h-1V431.5h-1V446.1h-1V446.1h-1V441.3h-1V441.3h-1V439.4h-1V439.4h-1V439.4h-1V444.7h-1V444.0h-1V440.3h-1V440.3h-1V440.3h-1V445.1h-1V445.1h-1V448.2h-1V446.5h-1V445.3h-1V445.3h-1V444.0h-1V443.4h-1V443.4h-1V440.7h-1V440.7h-1V440.3h-1V434.0h-1V434.0h-1V434.0h-1V436.6h-1V440.2h-1V440.2h-1V440.2h-1V444.4h-1V449.3h-1V449.3h-1V447.6h-1V441.9h-1V435.8h-1V435.8h-1V425.6h-1V409.0h-1V404.6h-1V404.6h-1V404.6h-1V407.2h-1V407.2h-1V407.2h-1V407.6h-1V407.6h-1V407.6h-1V409.9h-1V409.9h-1V409.9h-1V408.5h-1V408.5h-1V408.5h-1V410.6h-1V410.9h-1V410.9h-1V410.9h-1V411.3h-1V410.9h-1V410.9h-1V410.7h-1V410.7h-1V410.7h-1V410.2h-1V409.1h-1V409.1h-1V408.0h-1V408.0h-1V405.6h-1V404.9h-1V404.9h-1V404.7h-1V404.7h-1V404.7h-1V409.3h-1V409.3h-1V405.6h-1V405.6h-1V405.6h-1V406.5h-1V404.1h-1V404.1h-1V404.1h-1V404.4h-1V406.0h-1V406.0h-1V406.0h-1V406.2h-1V406.4h-1V406.4h-1V406.4h-1V406.6h-1V409.9h-1V409.9h-1V413.7h-1V415.2h-1V410.0h-1V409.9h-1V409.9h-1V407.2h-1V407.2h-1V406.6h-1V406.6h-1V406.6h-1V407.0h-1V411.0h-1V411.4h-1V409.5h-1V407.9h-1V407.9h-1V406.6h-1V406.6h-1V406.6h-1V405.3h-1V405.3h-1V405.3h-1V405.8h-1V405.0h-1V404.2h-1V402.7h-1V401.1h-1V399.7h-1V398.4h-1V398.4h-1Z" fill="#06556d"/>
<rect x="23" y="397" width="1554" height="1" fill="#0a7799"/>
<rect x="23" y="104" width="1554" height="28" fill="#17262e" stroke="#9fa4a7" stroke-width="2"/>
<rect x="22" y="103" width="2" height="30" fill="#e0544e"/>
<g fill="#e4e4e4" font-family="Liberation Sans" font-size="10.2" font-weight="bold" letter-spacing="0.88" text-anchor="middle"><text x="93" y="687.8">00:11.772</text><text x="163" y="687.8">00:23.544</text><text x="233" y="687.8">00:35.316</text><text x="303" y="687.8">00:47.88</text><text x="373" y="687.8">00:58.860</text><text x="443" y="687.8">01:10.632</text><text x="513" y="687.8">01:22.404</text><text x="583" y="687.8">01:34.176</text><text x="653" y="687.8">01:45.948</text><text x="723" y="687.8">01:57.720</text><text x="793" y="687.8">02:09.492</text><text x="863" y="687.8">02:21.264</text><text x="933" y="687.8">02:33.36</text><text x="1003" y="687.8">02:44.808</text><text x="1073" y="687.8">02:56.580</text><text x="1143" y="687.8">03:08.352</text><text x="1213" y="687.8">03:20.124</text><text x="1283" y="687.8">03:31.896</text><text x="1353" y="687.8">03:43.668</text><text x="1423" y="687.8">03:55.440</text><text x="1493" y="687.8">04:07.212</text></g>
</svg>

<!-- bottom controls -->
<svg class="a" style="left:16px;top:730px" width="64" height="29" viewBox="0 0 64 29">
<circle cx="14.4" cy="14.4" r="11.2" fill="none" stroke="#2d2f33" stroke-width="2.5"/>
<path d="M11.75 9.7 V19.5 L19.4 14.6 Z" fill="none" stroke="#2d2f33" stroke-width="2.5" stroke-linejoin="round"/>
<circle cx="49.5" cy="14.4" r="11.2" fill="none" stroke="#2d2f33" stroke-width="2.5"/>
<rect x="45.5" y="10.4" width="8" height="8" rx="1.2" fill="#2d2f33"/>
</svg>
<div class="a" style="left:100px;top:743px;width:438px;height:4px;background:#e4e4e4"></div>
<div class="a" style="left:93px;top:737px;width:15px;height:15px;border-radius:50%;border:1.5px solid #4c8cf5;background:#fff"></div>
<div class="a" style="left:98px;top:742px;width:5px;height:5px;border-radius:50%;background:#4c8cf5"></div>
<div class="t" style="left:450px;top:754px;font-size:12.15px;color:#4c8cf5">00:00:00</div><div class="t" style="left:501.5px;top:753.5px;font-size:13.5px;color:#333">/</div><div class="t" style="left:510px;top:754px;font-size:12.4px;color:#333">04:19</div>
<div class="a" style="left:547px;top:735px;width:1px;height:19px;background:#e3e6ee"></div>
<svg class="a" style="left:552px;top:732px" width="26" height="26" viewBox="0 0 26 26">
<path d="M1.3 5.15 H21.1 V24.5 M6.2 0.3 V19.6 H25.6" fill="none" stroke="#5c5e63" stroke-width="1.8" stroke-linecap="round" stroke-linejoin="round"/>
<rect x="9.4" y="8.3" width="8.5" height="8.3" rx="1.2" fill="#5c5e63"/>
</svg>
<div class="t" style="left:583px;top:739px;font-size:12px;color:#555">开始时间</div>
<div class="a" style="left:634px;top:732px;width:35px;height:25px;border:1px solid #f0f2f9"></div>
<div class="t" style="left:645px;top:739px;font-size:12px;color:#222">00</div>
<div class="a" style="left:684px;top:732px;width:35px;height:25px;border:1px solid #f0f2f9"></div>
<div class="t" style="left:695px;top:739px;font-size:12px;color:#222">00</div>
<div class="a" style="left:675px;top:741px;width:3.5px;height:3.5px;border-radius:50%;background:#333"></div>
<div class="a" style="left:675px;top:748px;width:3.5px;height:3.5px;border-radius:50%;background:#333"></div>
<div class="a" style="left:725px;top:741px;width:3.5px;height:3.5px;border-radius:50%;background:#333"></div>
<div class="a" style="left:725px;top:748px;width:3.5px;height:3.5px;border-radius:50%;background:#333"></div>
<div class="a" style="left:734px;top:732px;width:81px;height:25px;border:1px solid #f0f2f9"></div>
<div class="a" style="left:783px;top:733px;width:1px;height:23px;background:#f0f2f7"></div>
<div class="a" style="left:784px;top:744px;width:30px;height:1px;background:#f0f2f7"></div>
<div class="t" style="left:743px;top:739px;font-size:12.5px;color:#666">00.000</div>
<svg class="a" style="left:793px;top:735px" width="12" height="20" viewBox="0 0 12 20"><path d="M1.5 5.5 L6 1.5 L10.5 5.5 M1.5 13.5 L6 17.5 L10.5 13.5" fill="none" stroke="#333" stroke-width="1.6" stroke-linecap="round"/></svg>
<svg class="a" style="left:828px;top:737px" width="14" height="17" viewBox="0 0 14 17"><path d="M7 15.2 C4 11.5 1 9 1 6.2 A6 6 0 0 1 13 6.2 C13 9 10 11.5 7 15.2 Z" fill="#5c5e63"/><circle cx="7" cy="6.4" r="1.8" fill="#fff"/></svg>
<div class="t" style="left:857px;top:739px;font-size:12px;color:#555">结束时间</div>
<div class="a" style="left:908px;top:732px;width:35px;height:25px;border:1px solid #f0f2f9"></div>
<div class="t" style="left:919px;top:739px;font-size:12px;color:#222">00</div>
<div class="a" style="left:958px;top:732px;width:35px;height:25px;border:1px solid #f0f2f9"></div>
<div class="t" style="left:969px;top:739px;font-size:12px;color:#222">00</div>
<div class="a" style="left:949px;top:741px;width:3.5px;height:3.5px;border-radius:50%;background:#333"></div>
<div class="a" style="left:949px;top:748px;width:3.5px;height:3.5px;border-radius:50%;background:#333"></div>
<div class="a" style="left:999px;top:741px;width:3.5px;height:3.5px;border-radius:50%;background:#333"></div>
<div class="a" style="left:999px;top:748px;width:3.5px;height:3.5px;border-radius:50%;background:#333"></div>
<div class="a" style="left:1008px;top:732px;width:81px;height:25px;border:1px solid #f0f2f9"></div>
<div class="a" style="left:1057px;top:733px;width:1px;height:23px;background:#f0f2f7"></div>
<div class="a" style="left:1058px;top:744px;width:30px;height:1px;background:#f0f2f7"></div>
<div class="t" style="left:1017px;top:739px;font-size:12.5px;color:#666">00.000</div>
<svg class="a" style="left:1067px;top:735px" width="12" height="20" viewBox="0 0 12 20"><path d="M1.5 5.5 L6 1.5 L10.5 5.5 M1.5 13.5 L6 17.5 L10.5 13.5" fill="none" stroke="#333" stroke-width="1.6" stroke-linecap="round"/></svg>
<svg class="a" style="left:1102px;top:737px" width="14" height="17" viewBox="0 0 14 17"><path d="M7 15.2 C4 11.5 1 9 1 6.2 A6 6 0 0 1 13 6.2 C13 9 10 11.5 7 15.2 Z" fill="#5c5e63"/><circle cx="7" cy="6.4" r="1.8" fill="#fff"/></svg>
<div class="a" style="left:1501px;top:735px;width:1px;height:19px;background:#e3e6ee"></div>
<svg class="a" style="left:1519px;top:734px" width="22" height="22" viewBox="0 0 22 22">
<circle cx="10.2" cy="10.1" r="6.3" fill="none" stroke="#5c5e63" stroke-width="2"/>
<path d="M14.8 14.8 L17.8 17.6" stroke="#5c5e63" stroke-width="2.2" stroke-linecap="round"/>
<path d="M10.2 7 V13.2 M7.1 10.1 H13.3" stroke="#5c5e63" stroke-width="1.8"/>
</svg>
<svg class="a" style="left:1559px;top:734px" width="22" height="22" viewBox="0 0 22 22">
<circle cx="10.2" cy="10.1" r="6.3" fill="none" stroke="#5c5e63" stroke-width="2"/>
<path d="M14.8 14.8 L17.8 17.6" stroke="#5c5e63" stroke-width="2.2" stroke-linecap="round"/>
<path d="M7.1 10.1 H13.3" stroke="#5c5e63" stroke-width="1.8"/>
</svg>
<div class="a" style="left:18.0px;top:787px;width:124.5px;height:30px;border-radius:5px;background:#f3f3f3"></div>
<div class="a" style="left:152.4px;top:787px;width:124.5px;height:30px;border-radius:5px;background:#f3f3f3"></div>
<div class="a" style="left:286.8px;top:787px;width:124.5px;height:30px;border-radius:5px;background:#f3f3f3"></div>
<div class="a" style="left:421.2px;top:787px;width:124.5px;height:30px;border-radius:5px;background:#f3f3f3"></div>
<div class="a" style="left:555.6px;top:787px;width:124.5px;height:30px;border-radius:5px;background:#f3f3f3"></div>
<div class="a" style="left:690.0px;top:787px;width:124.5px;height:30px;border-radius:5px;background:#f3f3f3"></div>
<div class="a" style="left:824.4px;top:787px;width:124.5px;height:30px;border-radius:5px;background:#f3f3f3"></div>
<div class="a" style="left:958.8px;top:787px;width:124.5px;height:30px;border-radius:5px;background:#f3f3f3"></div>
<div class="a" style="left:1093.2px;top:787px;width:124.5px;height:30px;border-radius:5px;background:#f3f3f3"></div>
<div class="a" style="left:1227.6px;top:787px;width:124.5px;height:30px;border-radius:5px;background:#f3f3f3"></div>
<div class="a" style="left:1362.0px;top:787px;width:124.5px;height:30px;border-radius:5px;background:#f3f3f3"></div>
<div class="a" style="left:1502px;top:787px;width:84.5px;height:30px;border-radius:5px;background:#f3f3f3"></div>
</body></html>
